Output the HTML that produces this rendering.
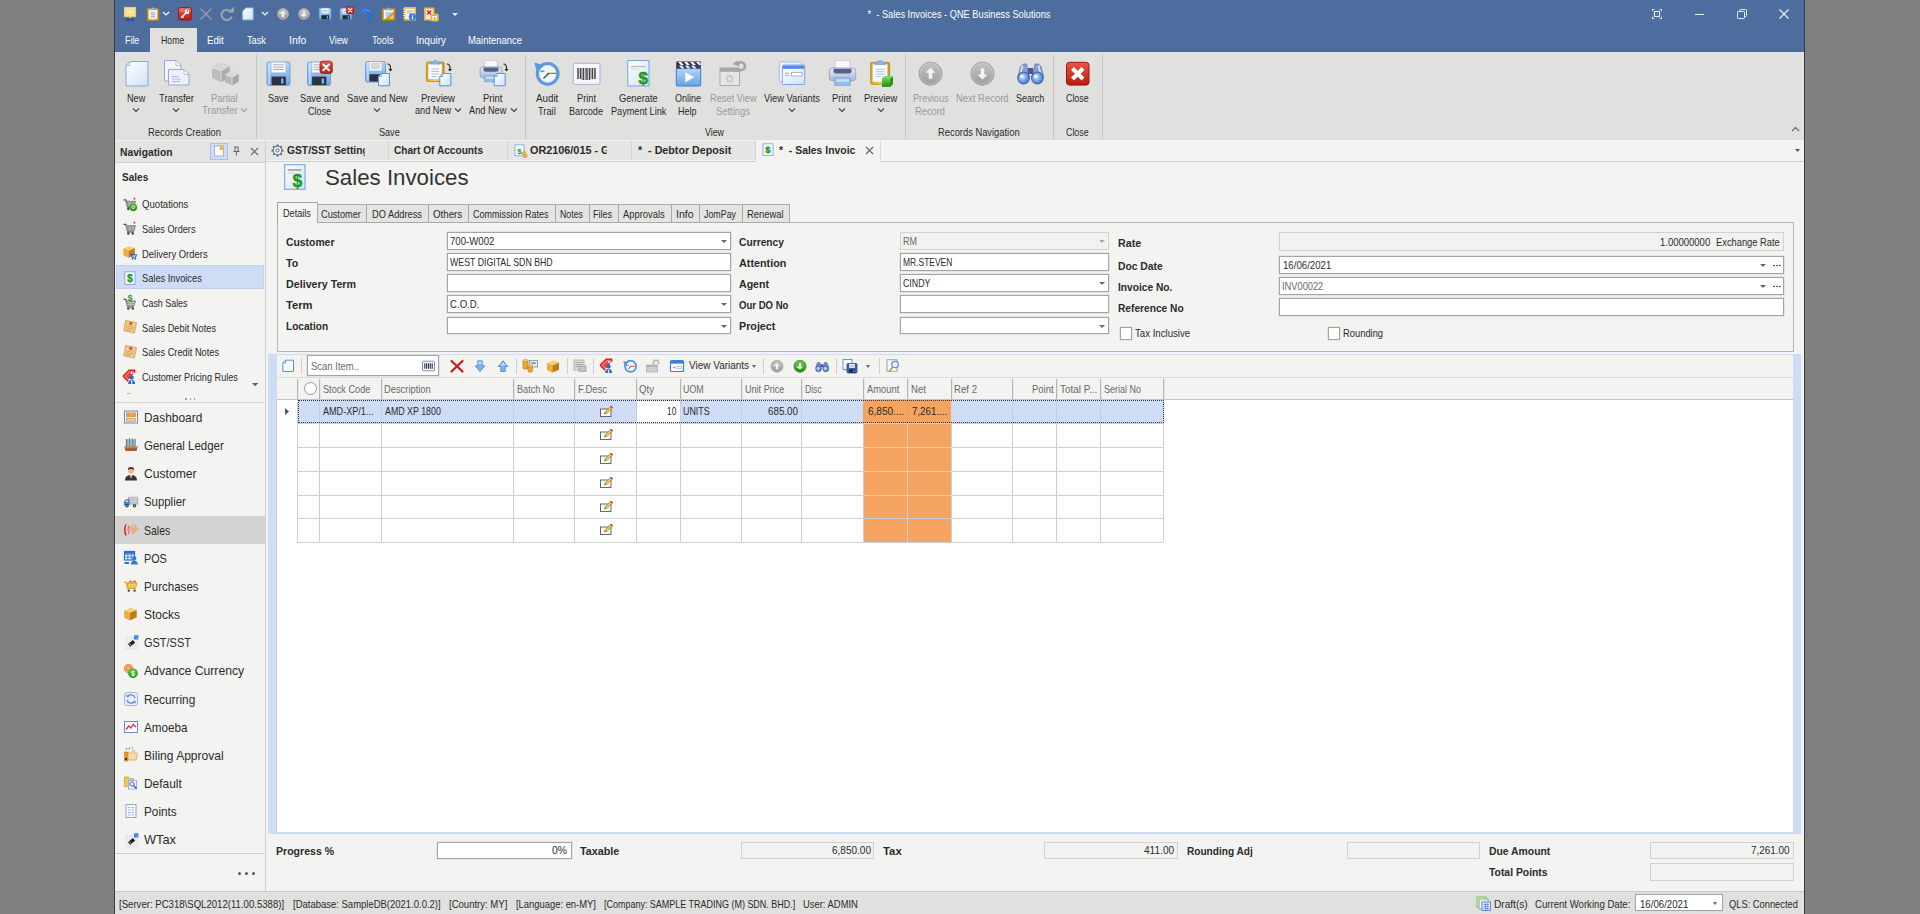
<!DOCTYPE html><html><head><meta charset="utf-8"><title>Sales Invoices</title><style>
*{box-sizing:border-box;margin:0;padding:0}
html,body{width:1920px;height:914px;overflow:hidden;background:#808080}
body{font-family:"Liberation Sans",sans-serif;font-size:11.5px;color:#2b2b2b;position:relative}
div,span,svg.i{position:absolute}
span{white-space:nowrap;line-height:13px}
.b{font-weight:bold}
.wh{color:#fff}
.dis{color:#9a9a9a}
.g{color:#6a6a6a}
.n13{font-size:13.6px;line-height:16px}
.fld{background:#fff;border:1px solid #a4a4a2;box-shadow:0 0 0 .5px #d8d8d6}
.ro{background:#f2f2f0;border:1px solid #d2d2d0}
.sep{width:1px;background:#c9c9c7}
.tab{border:1px solid #a9a9a7;background:#e4e4e2}
.dd{width:0;height:0;border-left:3px solid transparent;border-right:3px solid transparent;border-top:3px solid #666}
</style></head><body><svg width="0" height="0" style="position:absolute"><defs>
<linearGradient id="gDoc" x1="0" y1="0" x2="1" y2="1"><stop offset="0" stop-color="#ffffff"/><stop offset="1" stop-color="#cfe2f8"/></linearGradient>
<linearGradient id="gBlue" x1="0" y1="0" x2="0" y2="1"><stop offset="0" stop-color="#b4d5f7"/><stop offset="1" stop-color="#69a3e4"/></linearGradient>
<linearGradient id="gGray" x1="0" y1="0" x2="0" y2="1"><stop offset="0" stop-color="#c4c4c4"/><stop offset="1" stop-color="#9c9c9c"/></linearGradient>
<linearGradient id="gRed" x1="0" y1="0" x2="0" y2="1"><stop offset="0" stop-color="#e8564a"/><stop offset="1" stop-color="#b81d12"/></linearGradient>
<linearGradient id="gGold" x1="0" y1="0" x2="1" y2="0"><stop offset="0" stop-color="#d9a520"/><stop offset="0.5" stop-color="#f7d35a"/><stop offset="1" stop-color="#c8951a"/></linearGradient>
<linearGradient id="gGreen" x1="0" y1="0" x2="0" y2="1"><stop offset="0" stop-color="#6fd04a"/><stop offset="1" stop-color="#1f8a12"/></linearGradient>
<linearGradient id="gPrn" x1="0" y1="0" x2="0" y2="1"><stop offset="0" stop-color="#e6ebf7"/><stop offset="1" stop-color="#a9b6d8"/></linearGradient>
<radialGradient id="gLens" cx="0.4" cy="0.4" r="0.6"><stop offset="0" stop-color="#cfe4ff"/><stop offset="1" stop-color="#3f78d0"/></radialGradient>
<linearGradient id="gBox" x1="0" y1="0" x2="1" y2="1"><stop offset="0" stop-color="#f6c65a"/><stop offset="1" stop-color="#c98a1c"/></linearGradient>
</defs></svg>
<div style="left:114px;top:0px;width:1px;height:914px;background:#3c3c3c"></div>
<div style="left:1804px;top:0px;width:1px;height:914px;background:#3c3c3c"></div>
<div style="left:115px;top:0px;width:1689px;height:52px;background:#4c6d9d"></div>
<div style="left:115px;top:51px;width:1689px;height:1px;background:#52688a"></div>
<div style="left:115px;top:52px;width:1689px;height:1px;background:#dbe5f3"></div>
<div style="left:115px;top:52px;width:1689px;height:89px;background:#e0e0de;border-bottom:1px solid #cdcdcb"></div>
<div style="left:115px;top:52px;width:1689px;height:1px;background:#dbe5f3"></div>
<div style="left:150px;top:28px;width:47px;height:24px;background:#e0e0de"></div>
<svg class="i" style="left:122px;top:6px" width="16" height="16" viewBox="0 0 16 16"><rect x="2.200" y="1.200" width="11.600" height="9.600" fill="#f8e08c" stroke="#f0d070" stroke-width=".6"/><path d="M5 4.500l3 2 3-2" fill="none" stroke="#fdf2c4" stroke-width="1.200"/><path d="M6.300 10.800h3.400l-1.700 2z" fill="#e8c44a"/><rect x="4" y="12.600" width="8" height="2.200" fill="#2b3f8c"/><path d="M6 12.600v2.200M8 12.600v2.200M10 12.600v2.200" stroke="#5f76c0" stroke-width=".6"/></svg>
<svg class="i" style="left:145px;top:6px" width="16" height="16" viewBox="0 0 16 16"><rect x="2.2" y="2.3" width="11.6" height="12.3" rx="1" fill="url(#gGold)" stroke="#a87c14" stroke-width=".7"/><rect x="3.9000000000000004" y="3.8" width="8.2" height="8.8" fill="#f7fbff"/><path d="M5.5 6.8h5.0M5.5 8.8h5.0M5.5 10.8h5.0" stroke="#6f8fc0" stroke-width=".9"/><path d="M5.1 3.8q0-1.8 2.088-1.8q0.812-1.8 1.624 0q2.088 0 2.088 1.8z" fill="#8fb8e8" stroke="#5b8fd4" stroke-width=".5"/></svg>
<svg class="i" style="left:176.5px;top:6px" width="16" height="16" viewBox="0 0 16 16"><rect x="1.5" y="1.5" width="13" height="12.6" rx="2" fill="url(#gRed)" stroke="#9c1208" stroke-width=".8"/><rect x="2.3" y="2.2" width="11.4" height="4" rx="1.5" fill="#f08a80" opacity=".55"/><circle cx="10" cy="5.8" r="2.3" fill="#fff"/><path d="M8.6 7.2l-4.4 4.4" stroke="#fff" stroke-width="1.6"/><path d="M5.4 10.4l1.3 1.3" stroke="#fff" stroke-width="1.2"/><circle cx="10.5" cy="5.3" r=".8" fill="#d43a2e"/></svg>
<svg class="i" style="left:197.7px;top:6px" width="16" height="16" viewBox="0 0 16 16"><path d="M2.5 2.5l11 11M13.5 2.5l-11 11" stroke="#8f98a8" stroke-width="1.6"/></svg>
<svg class="i" style="left:218.6px;top:6px" width="16" height="16" viewBox="0 0 16 16"><path d="M12.3 6.3A5.2 5.2 0 1 0 12.8 10.5" fill="none" stroke="#9aa2ad" stroke-width="2.2"/><path d="M8.8 6.6h6.2v-6z" fill="#9aa2ad"/></svg>
<svg class="i" style="left:240px;top:6px" width="16" height="16" viewBox="0 0 16 16"><path d="M5.8 2H13.0V13.8H2.8V5Z" fill="url(#gDoc)" stroke="#9fc0ee" stroke-width="1"/></svg>
<svg class="i" style="left:275px;top:6px" width="16" height="16" viewBox="0 0 16 16"><circle cx="8" cy="8" r="5.5" fill="url(#gGray)" stroke="#a6a6a6" stroke-width=".8"/><path d="M8 4.8l3 3h-1.8v3.2h-2.4v-3.2h-3z" fill="#f0f0f0"/></svg>
<svg class="i" style="left:296px;top:6px" width="16" height="16" viewBox="0 0 16 16"><circle cx="8" cy="8" r="5.5" fill="url(#gGray)" stroke="#a6a6a6" stroke-width=".8"/><path d="M8 11.2l3 -3h-1.8v-3.2h-2.4v3.2h-3z" fill="#f0f0f0"/></svg>
<svg class="i" style="left:317px;top:6px" width="16" height="16" viewBox="0 0 16 16"><rect x="2" y="2" width="12.2" height="11.6" rx="1" fill="url(#gBlue)" stroke="#4f86cf" stroke-width=".8"/><rect x="4.683999999999999" y="2.4" width="6.832" height="4.872" fill="#f4f4f4"/><path d="M5.66 4.9h4.88" stroke="#999" stroke-width=".9"/><rect x="4.4399999999999995" y="9.192" width="7.563999999999999" height="4.108" fill="#222836"/><rect x="9.808" y="10.12" width="1" height="2.32" fill="#9cc8f4"/></svg>
<svg class="i" style="left:338px;top:6px" width="16" height="16" viewBox="0 0 16 16"><rect x="2" y="2.2" width="12" height="11.4" rx="1" fill="url(#gBlue)" stroke="#4f86cf" stroke-width=".8"/><rect x="4.640000000000001" y="2.6" width="6.720000000000001" height="4.788" fill="#f4f4f4"/><path d="M5.6 5.050000000000001h4.800000000000001" stroke="#999" stroke-width=".9"/><rect x="4.4" y="9.268" width="7.4399999999999995" height="4.032" fill="#222836"/><rect x="9.68" y="10.18" width="1" height="2.2800000000000002" fill="#9cc8f4"/><rect x="8.6" y="0.8" width="7" height="7" rx="1.2" fill="url(#gRed)" stroke="#a3160d" stroke-width=".8"/><path d="M10.49 2.6900000000000004L13.709999999999999 5.909999999999999M13.709999999999999 2.6900000000000004L10.49 5.909999999999999" stroke="#fff" stroke-width="1.1900000000000002" stroke-linecap="round"/></svg>
<svg class="i" style="left:359px;top:6px" width="16" height="16" viewBox="0 0 16 16"><path d="M4.500 4.800h3.200q4.300 0 4.300 4.300q0 3-2.800 5.400" fill="none" stroke="#2a6be0" stroke-width="2.600"/><path d="M4.500 4.300h3.200q3.300 0 4 2.800" fill="none" stroke="#6fa4f4" stroke-width="1"/><path d="M7 1v7.600l-5.600-3.800z" fill="#3a7ceb"/></svg>
<svg class="i" style="left:381px;top:6px" width="16" height="16" viewBox="0 0 16 16"><rect x="1.3" y="2.5" width="12.7" height="12.0" rx="1" fill="#e2a820" stroke="#a87c14" stroke-width=".7"/><rect x="3.0" y="4" width="9.299999999999999" height="8.5" fill="#f7fbff"/><path d="M4.6 7h6.1M4.6 9h6.1M4.6 11h6.1" stroke="#6f8fc0" stroke-width=".9"/><path d="M4.475 4q0-1.8 2.2859999999999996-1.8q0.889-1.8 1.778 0q2.2859999999999996 0 2.2859999999999996 1.8z" fill="#8fb8e8" stroke="#5b8fd4" stroke-width=".5"/><path d="M14 4.5v9.5h-9.5z" fill="#d6a030" stroke="#9a6c10" stroke-width=".6"/><path d="M12 9v3.5h-3.5z" fill="#f5d98a"/></svg>
<svg class="i" style="left:402px;top:6px" width="16" height="16" viewBox="0 0 16 16"><rect x="2" y="1" width="12" height="13.5" fill="#f0b848"/><rect x="3.5" y="2.8" width="9" height="10" fill="#faf6ee"/><path d="M2 2.5v11" stroke="#fff" stroke-width="1.4" stroke-dasharray="1 1.2"/><path d="M5 5h6.5M5 7h4" stroke="#999" stroke-width=".8"/><circle cx="10.5" cy="10.8" r="3.6" fill="#2f78d4" stroke="#6fa4e8" stroke-width=".6"/><path d="M10.5 8.4v1M10.5 10.2v3" stroke="#fff" stroke-width="1.3"/></svg>
<svg class="i" style="left:423px;top:6px" width="16" height="16" viewBox="0 0 16 16"><rect x="1" y="1.5" width="10.5" height="13" fill="#e8b450"/><rect x="2.8" y="3" width="7" height="10" fill="#f6ead2"/><path d="M4.3 4.5l3.8 4M8.1 4.5l-3.8 4" stroke="#c6282a" stroke-width="1.4"/><path d="M4.5 1.5q1.7-1.8 3.5 0" fill="#999" stroke="#777" stroke-width=".5"/><rect x="7.8" y="8" width="7.5" height="7" rx="1" fill="#e9a820" stroke="#f6d98a" stroke-width=".6"/><path d="M10 10.2v4M13 10.2v4M9 10.6h5" stroke="#fff" stroke-width="1.1"/></svg>
<svg class="i" style="left:162px;top:11px" width="8" height="6" viewBox="0 0 8 6"><path d="M1 1 L4 4 L7 1" stroke="#fff" stroke-width="1.2" fill="none"/></svg>
<svg class="i" style="left:261px;top:11px" width="8" height="6" viewBox="0 0 8 6"><path d="M1 1 L4 4 L7 1" stroke="#fff" stroke-width="1.2" fill="none"/></svg>
<svg class="i" style="left:451.500px;top:13px" width="6" height="3" viewBox="0 0 6 3"><path d="M0 0h6L3 3z" fill="#e8ecf4"/></svg>
<span class="t wh" style="left:958.5px;top:8px;transform:translateX(-50%) scaleX(0.804);transform-origin:50% 0;">*&nbsp; - Sales Invoices - QNE Business Solutions</span>
<svg class="i" style="left:1652px;top:9px" width="10" height="10" viewBox="0 0 10 10"><rect x="2.500" y="2.500" width="5" height="5" fill="none" stroke="#e6ebf3" stroke-width="1.100"/><path d="M.5 2.300V.5h1.800M7.700 .5h1.800v1.800M9.500 7.700v1.800H7.700M2.300 9.500H.5V7.700" stroke="#e6ebf3" stroke-width="1" fill="none"/></svg>
<div style="left:1695px;top:14px;width:9px;height:1px;background:#f0f3f8"></div>
<svg class="i" style="left:1736.500px;top:9px" width="10" height="10" viewBox="0 0 10 10"><rect x=".5" y="2.500" width="7" height="7" rx=".8" fill="none" stroke="#e6ebf3" stroke-width="1"/><path d="M2.500 2.500v-1.200q0-.8 .8-.8h5.400q.8 0 .8 .8v5.400q0 .8-.8 .8h-1.200" fill="none" stroke="#e6ebf3" stroke-width="1"/></svg>
<svg class="i" style="left:1778.500px;top:9px" width="10" height="10" viewBox="0 0 10 10"><path d="M.5 .5l9 9M9.500 .5l-9 9" stroke="#f0f3f8" stroke-width="1.100"/></svg>
<span class="t wh" style="left:125px;top:34px;transform:scaleX(0.772);transform-origin:0 0;">File</span>
<span class="t " style="left:161px;top:34px;transform:scaleX(0.759);transform-origin:0 0;">Home</span>
<span class="t wh" style="left:207.3px;top:34px;transform:scaleX(0.842);transform-origin:0 0;">Edit</span>
<span class="t wh" style="left:247px;top:34px;transform:scaleX(0.803);transform-origin:0 0;">Task</span>
<span class="t wh" style="left:288.7px;top:34px;transform:scaleX(0.902);transform-origin:0 0;">Info</span>
<span class="t wh" style="left:329.3px;top:34px;transform:scaleX(0.769);transform-origin:0 0;">View</span>
<span class="t wh" style="left:371.7px;top:34px;transform:scaleX(0.804);transform-origin:0 0;">Tools</span>
<span class="t wh" style="left:416px;top:34px;transform:scaleX(0.869);transform-origin:0 0;">Inquiry</span>
<span class="t wh" style="left:468.3px;top:34px;transform:scaleX(0.82);transform-origin:0 0;">Maintenance</span>
<svg class="i" style="left:120px;top:58px" width="32" height="32" viewBox="0 0 32 32"><path d="M10 3.5H28V28.0H6V7.5Z" fill="url(#gDoc)" stroke="#8ea6d6" stroke-width="1"/><path d="M6 7.5H10V3.5Z" fill="#e8f0fb" stroke="#8ea6d6" stroke-width="0.7"/></svg>
<span class="t" style="left:126.7px;top:92px;transform:scaleX(0.795);transform-origin:0 0;">New</span>
<svg class="i" style="left:132px;top:108px" width="8" height="5" viewBox="0 0 8 5"><path d="M1 0.500 L4 3.500 L7 0.500" stroke="#444" stroke-width="1.100" fill="none"/></svg>
<svg class="i" style="left:160px;top:58px" width="32" height="32" viewBox="0 0 32 32"><path d="M4.5 2.5H16.0L21.0 7.5V23.0H4.5Z" fill="#f3f5fd" stroke="#9aa8dc" stroke-width="1"/><path d="M16.0 2.5V7.5H21.0Z" fill="#fff" stroke="#9aa8dc" stroke-width="0.7"/><path d="M8.5 11.5H24.0L29.0 16.5V27.0H8.5Z" fill="#eef1fc" stroke="#9aa8dc" stroke-width="1"/><path d="M24.0 11.5V16.5H29.0Z" fill="#fff" stroke="#9aa8dc" stroke-width="0.7"/><path d="M12 18.5h7M12 21h9M12 23.5h8" stroke="#a9b6e2" stroke-width="1.2"/></svg>
<span class="t" style="left:159px;top:92px;transform:scaleX(0.826);transform-origin:0 0;">Transfer</span>
<svg class="i" style="left:172px;top:108px" width="8" height="5" viewBox="0 0 8 5"><path d="M1 0.500 L4 3.500 L7 0.500" stroke="#444" stroke-width="1.100" fill="none"/></svg>
<svg class="i" style="left:208px;top:58px" width="32" height="32" viewBox="0 0 32 32"><path d="M4 9.500l8.500-5 9 3.500v10.500l-8.500 5.500-9-4z" fill="#bdbdbd"/><path d="M4 9.500l8.500-5 9 3.500-8.500 5z" fill="#d9d9d9"/><path d="M13 13v11.500l8.500-5.500v-10.500z" fill="#acacac"/><path d="M4 9.500l9 3.500 8.500-5M13 13v11.500" stroke="#e2e2e2" stroke-width=".7" fill="none"/><path d="M8 7.200l9 3.600" stroke="#cacaca" stroke-width=".8"/><path d="M17 16.500l6.500-4 7 3v8l-6.500 4-7-3.200z" fill="#b8b8b8"/><path d="M17 16.500l6.500-4 7 3-6.500 4z" fill="#dadada"/><path d="M24 19.500v8l6.500-4v-8z" fill="#a8a8a8"/><path d="M17 16.500l7 3 6.500-4M24 19.500v8" stroke="#e4e4e4" stroke-width=".7" fill="none"/></svg>
<span class="t dis" style="left:211px;top:92px;transform:scaleX(0.819);transform-origin:0 0;">Partial</span>
<span class="t dis" style="left:201.7px;top:104px;transform:scaleX(0.84);transform-origin:0 0;">Transfer</span>
<svg class="i" style="left:240.2px;top:108px" width="8" height="5" viewBox="0 0 8 5"><path d="M1 0.500 L4 3.500 L7 0.500" stroke="#a2a2a2" stroke-width="1.100" fill="none"/></svg>
<svg class="i" style="left:262px;top:58px" width="32" height="32" viewBox="0 0 32 32"><rect x="5" y="4" width="23" height="23.5" rx="2" fill="url(#gBlue)" stroke="#6a9cdf" stroke-width=".9"/><rect x="6.3" y="5" width="1.8" height="21.5" fill="#d8e9fb" opacity=".7"/><rect x="9.600000000000001" y="4.5" width="13.799999999999999" height="9.87" fill="#fbfbfb" stroke="#c9d3e3" stroke-width=".5"/><path d="M11.100000000000001 6.82h10.799999999999999M11.100000000000001 9.17h10.799999999999999M11.100000000000001 11.52h10.799999999999999" stroke="#a4a4a4" stroke-width=".9"/><rect x="9.600000000000001" y="18.57" width="14.26" height="8.43" fill="#2c3240"/><rect x="19.259999999999998" y="20.45" width="2.07" height="5.17" fill="#8fc0f2"/></svg>
<span class="t" style="left:267.7px;top:92px;transform:scaleX(0.786);transform-origin:0 0;">Save</span>
<svg class="i" style="left:303px;top:58px" width="32" height="32" viewBox="0 0 32 32"><rect x="4.5" y="4" width="23" height="23.5" rx="2" fill="url(#gBlue)" stroke="#6a9cdf" stroke-width=".9"/><rect x="5.8" y="5" width="1.8" height="21.5" fill="#d8e9fb" opacity=".7"/><rect x="9.100000000000001" y="4.5" width="13.799999999999999" height="9.87" fill="#fbfbfb" stroke="#c9d3e3" stroke-width=".5"/><path d="M10.600000000000001 6.82h10.799999999999999M10.600000000000001 9.17h10.799999999999999M10.600000000000001 11.52h10.799999999999999" stroke="#a4a4a4" stroke-width=".9"/><rect x="9.100000000000001" y="18.57" width="14.26" height="8.43" fill="#2c3240"/><rect x="18.759999999999998" y="20.45" width="2.07" height="5.17" fill="#8fc0f2"/><rect x="17" y="3.2" width="12.3" height="12.3" rx="2.5" fill="url(#gRed)" stroke="#a3160d" stroke-width=".8"/><path d="M20.321 6.521000000000001L25.979 12.179000000000002M25.979 6.521000000000001L20.321 12.179000000000002" stroke="#fff" stroke-width="2.091" stroke-linecap="round"/></svg>
<span class="t" style="left:300px;top:92px;transform:scaleX(0.808);transform-origin:0 0;">Save and</span>
<span class="t" style="left:307.7px;top:104.5px;transform:scaleX(0.782);transform-origin:0 0;">Close</span>
<svg class="i" style="left:361px;top:58px" width="32" height="32" viewBox="0 0 32 32"><rect x="4.5" y="3.5" width="20" height="20.5" rx="2" fill="url(#gBlue)" stroke="#6a9cdf" stroke-width=".9"/><rect x="5.8" y="4.5" width="1.8" height="18.5" fill="#d8e9fb" opacity=".7"/><rect x="8.5" y="4.0" width="12.0" height="8.61" fill="#fbfbfb" stroke="#c9d3e3" stroke-width=".5"/><path d="M10.0 5.96h9.0M10.0 8.01h9.0M10.0 10.06h9.0" stroke="#a4a4a4" stroke-width=".9"/><rect x="8.5" y="16.21" width="12.4" height="7.29" fill="#2c3240"/><rect x="16.9" y="17.85" width="1.7999999999999998" height="4.51" fill="#8fc0f2"/><path d="M20.5 15.5H28.5V27.8H17.5V18.5Z" fill="url(#gDoc)" stroke="#5f8fd8" stroke-width="1"/><path d="M17.5 18.5H20.5V15.5Z" fill="#e8f0fb" stroke="#5f8fd8" stroke-width="0.7"/><path d="M26.5 6q3 0 3 4v2" fill="none" stroke="#222" stroke-width="1.1"/><path d="M27.5 11h4l-2 2.6z" fill="#222"/></svg>
<span class="t" style="left:346.7px;top:92px;transform:scaleX(0.81);transform-origin:0 0;">Save and New</span>
<svg class="i" style="left:373px;top:108px" width="8" height="5" viewBox="0 0 8 5"><path d="M1 0.500 L4 3.500 L7 0.500" stroke="#444" stroke-width="1.100" fill="none"/></svg>
<svg class="i" style="left:421px;top:58px" width="32" height="32" viewBox="0 0 32 32"><rect x="5.3" y="4" width="17.8" height="19.5" rx="1.5" fill="url(#gGold)" stroke="#b8860b" stroke-width=".8"/><rect x="7.5" y="6" width="13.4" height="15.0" fill="#fafcff" stroke="#c9d3e3" stroke-width=".5"/><path d="M10.3 11h7.800000000000001M10.3 13.5h7.800000000000001M10.3 16h7.800000000000001M10.3 18.5h4.680000000000001" stroke="#9fc2ea" stroke-width="1.1"/><path d="M9.216000000000001 6Q9.216000000000001 3.5 12.420000000000002 3.5Q14.2 0.5 15.98 3.5Q19.184 3.5 19.184 6Z" fill="#8fb8e8" stroke="#5b8fd4" stroke-width=".7"/><path d="M21.8 15.5H29.8V27.8H18.8V18.5Z" fill="url(#gDoc)" stroke="#5f8fd8" stroke-width="1"/><path d="M18.8 18.5H21.8V15.5Z" fill="#e8f0fb" stroke="#5f8fd8" stroke-width="0.7"/><path d="M26 6q3 0 3 4v2" fill="none" stroke="#222" stroke-width="1.1"/><path d="M27 11h4l-2 2.6z" fill="#222"/></svg>
<span class="t" style="left:421px;top:92px;transform:scaleX(0.831);transform-origin:0 0;">Preview</span>
<span class="t" style="left:415px;top:104px;transform:scaleX(0.793);transform-origin:0 0;">and New</span>
<svg class="i" style="left:453.8px;top:108px" width="8" height="5" viewBox="0 0 8 5"><path d="M1 0.500 L4 3.500 L7 0.500" stroke="#444" stroke-width="1.100" fill="none"/></svg>
<svg class="i" style="left:477px;top:58px" width="32" height="32" viewBox="0 0 32 32"><rect x="7.84" y="2.3" width="12.32" height="9.24" fill="#fafbff" stroke="#b9c2d9" stroke-width=".7"/><rect x="3" y="8.899999999999999" width="22" height="11.0" rx="3" fill="url(#gPrn)" stroke="#8f9cc4" stroke-width=".8"/><path d="M6.52 9.56H21.48V11.98Q21.48 13.740000000000002 19.28 13.740000000000002H8.72Q6.52 13.740000000000002 6.52 11.98Z" fill="#55618a"/><rect x="7.4" y="17.26" width="13.2" height="6.6" fill="#8cc0ef" stroke="#8f9cc4" stroke-width=".7"/><rect x="8.72" y="18.580000000000002" width="10.559999999999999" height="2.2" fill="#c6e0f8"/><path d="M20.2 15.5H28.2V27.8H17.2V18.5Z" fill="url(#gDoc)" stroke="#5f8fd8" stroke-width="1"/><path d="M17.2 18.5H20.2V15.5Z" fill="#e8f0fb" stroke="#5f8fd8" stroke-width="0.7"/><path d="M26.5 6q3 0 3 4v2" fill="none" stroke="#222" stroke-width="1.1"/><path d="M27.5 11h4l-2 2.6z" fill="#222"/></svg>
<span class="t" style="left:483.3px;top:92px;transform:scaleX(0.82);transform-origin:0 0;">Print</span>
<span class="t" style="left:469.3px;top:104px;transform:scaleX(0.801);transform-origin:0 0;">And New</span>
<svg class="i" style="left:509.70000000000005px;top:108px" width="8" height="5" viewBox="0 0 8 5"><path d="M1 0.500 L4 3.500 L7 0.500" stroke="#444" stroke-width="1.100" fill="none"/></svg>
<svg class="i" style="left:531px;top:58px" width="32" height="32" viewBox="0 0 32 32"><circle cx="16.700" cy="15.800" r="10.300" fill="#f2f6fb" stroke="#5a9adf" stroke-width="3.200"/><path d="M3.300 4.800l10.200 2.300-7.300 7.400z" fill="#5a9adf"/><path d="M5 13.300h8.500" stroke="#5a9adf" stroke-width="1.600"/><circle cx="16.700" cy="15.800" r="8.300" fill="none" stroke="#d7e5f5" stroke-width="1"/><path d="M17.500 15.500L12.500 20.500" stroke="#444" stroke-width="1.300"/><circle cx="17.500" cy="15.500" r="1.100" fill="#555"/><path d="M18.500 15.300h7" stroke="#d23a2a" stroke-width="1"/></svg>
<span class="t" style="left:536px;top:92px;transform:scaleX(0.851);transform-origin:0 0;">Audit</span>
<span class="t" style="left:538.3px;top:104.5px;transform:scaleX(0.807);transform-origin:0 0;">Trail</span>
<svg class="i" style="left:570px;top:58px" width="32" height="32" viewBox="0 0 32 32"><rect x="3.3" y="5.3" width="26.7" height="21" rx="1" fill="#f7f8fd" stroke="#a9b2d8" stroke-width="1"/><path d="M8 10v11M10.5 10v11M13.5 10v12M17 10v12M19.5 10v12M22.5 10v11M25 10v11" stroke="#444" stroke-width="1.5"/><path d="M12 10v12M15.5 10v12M21 10v11" stroke="#777" stroke-width=".8"/></svg>
<span class="t" style="left:576.7px;top:92px;transform:scaleX(0.803);transform-origin:0 0;">Print</span>
<span class="t" style="left:569.3px;top:104.5px;transform:scaleX(0.794);transform-origin:0 0;">Barcode</span>
<svg class="i" style="left:622px;top:58px" width="32" height="32" viewBox="0 0 32 32"><rect x="5.8" y="2.5" width="21.2" height="25.5" fill="url(#gDoc)" stroke="#7fa3e0" stroke-width="1"/><path d="M9 8.5h14.5" stroke="#b5b5b5" stroke-width="1.2"/><path d="M9 11h8" stroke="#d0d0d0" stroke-width="1"/><text x="21.2" y="26.2" font-family="Liberation Sans" font-weight="bold" font-size="17" fill="#1f9a1f" stroke="#1f9a1f" stroke-width=".5" text-anchor="middle">$</text></svg>
<span class="t" style="left:618.7px;top:92px;transform:scaleX(0.805);transform-origin:0 0;">Generate</span>
<span class="t" style="left:610.7px;top:104.5px;transform:scaleX(0.794);transform-origin:0 0;">Payment Link</span>
<svg class="i" style="left:672px;top:58px" width="32" height="32" viewBox="0 0 32 32"><rect x="4.3" y="10" width="24.4" height="18" rx="1" fill="url(#gBlue)" stroke="#3f7fd0" stroke-width="1"/><rect x="4.3" y="3.5" width="24.4" height="7" fill="#2a3350"/><path d="M6 4l3 3h3l-3-3zM12 4l3 3h3l-3-3zM18 4l3 3h3l-3-3zM24 4l3 3h1.7v-1.3l-1.7-1.7z" fill="#fff"/><path d="M4.3 7.5h24.4v3H4.3z" fill="#3a4566"/><path d="M7 7.5l2.5 3h3l-2.5-3zM13 7.5l2.5 3h3l-2.5-3zM19 7.5l2.5 3h3l-2.5-3z" fill="#e6eaf4"/><path d="M13.5 14.5l8.5 4.7-8.5 4.8z" fill="#fff" stroke="#e6f0fb" stroke-width=".6"/></svg>
<span class="t" style="left:675px;top:92px;transform:scaleX(0.782);transform-origin:0 0;">Online</span>
<span class="t" style="left:678.3px;top:104.5px;transform:scaleX(0.778);transform-origin:0 0;">Help</span>
<svg class="i" style="left:717px;top:58px" width="32" height="32" viewBox="0 0 32 32"><rect x="3" y="10" width="19.5" height="17.5" fill="#e6e6e6" stroke="#a8a8a8" stroke-width="1"/><rect x="3" y="10" width="19.5" height="3.8" fill="#a8a8a8"/><g stroke="#c2c2c2" stroke-width="1.3"><path d="M12.7 16.5v8.4M8.5 20.7h8.4M9.7 17.7l6 6M15.7 17.7l-6 6"/></g><circle cx="12.7" cy="20.7" r="2.3" fill="#e6e6e6" stroke="#c2c2c2"/><path d="M17.5 12.2h6.5a4 4 0 1 0-4-4.6" fill="none" stroke="#a4a4a4" stroke-width="2.6"/><path d="M15.5 7.2h8l-4 -4.7z" fill="#a4a4a4" transform="rotate(12 19.5 6)"/></svg>
<span class="t dis" style="left:710px;top:92px;transform:scaleX(0.806);transform-origin:0 0;">Reset View</span>
<span class="t dis" style="left:716px;top:104.5px;transform:scaleX(0.818);transform-origin:0 0;">Settings</span>
<svg class="i" style="left:776px;top:58px" width="32" height="32" viewBox="0 0 32 32"><rect x="3.3" y="4" width="22.5" height="19.5" rx="1" fill="#f4f8fe" stroke="#9fbce8" stroke-width="1"/><rect x="6.3" y="7" width="22.4" height="19.5" rx="1" fill="url(#gDoc)" stroke="#7fa3e0" stroke-width="1"/><rect x="6.8" y="7.5" width="21.4" height="3.3" fill="#4d8be0"/><path d="M9 15.3h4M9 17.5h4" stroke="#b0b0b0" stroke-width="1.1"/><rect x="15.5" y="14.5" width="10.5" height="3.5" fill="#fff" stroke="#b0b0b0" stroke-width=".9"/></svg>
<span class="t" style="left:764px;top:92px;transform:scaleX(0.809);transform-origin:0 0;">View Variants</span>
<svg class="i" style="left:788px;top:108px" width="8" height="5" viewBox="0 0 8 5"><path d="M1 0.500 L4 3.500 L7 0.500" stroke="#444" stroke-width="1.100" fill="none"/></svg>
<svg class="i" style="left:826px;top:58px" width="32" height="32" viewBox="0 0 32 32"><rect x="9.108" y="2.3" width="14.784" height="10.752" fill="#fafbff" stroke="#b9c2d9" stroke-width=".7"/><rect x="3.3" y="9.98" width="26.4" height="12.8" rx="3" fill="url(#gPrn)" stroke="#8f9cc4" stroke-width=".8"/><path d="M7.524 10.748000000000001H25.476V13.564Q25.476 15.612000000000002 22.836 15.612000000000002H10.164Q7.524 15.612000000000002 7.524 13.564Z" fill="#55618a"/><rect x="8.58" y="19.708000000000002" width="15.839999999999998" height="7.68" fill="#8cc0ef" stroke="#8f9cc4" stroke-width=".7"/><rect x="10.164" y="21.244" width="12.671999999999999" height="2.5600000000000005" fill="#c6e0f8"/></svg>
<span class="t" style="left:832.3px;top:92px;transform:scaleX(0.82);transform-origin:0 0;">Print</span>
<svg class="i" style="left:838px;top:108px" width="8" height="5" viewBox="0 0 8 5"><path d="M1 0.500 L4 3.500 L7 0.500" stroke="#444" stroke-width="1.100" fill="none"/></svg>
<svg class="i" style="left:864px;top:58px" width="32" height="32" viewBox="0 0 32 32"><rect x="6.6" y="4.3" width="19" height="22" rx="1.5" fill="url(#gGold)" stroke="#b8860b" stroke-width=".8"/><rect x="8.8" y="6.3" width="14.6" height="17.5" fill="#fafcff" stroke="#c9d3e3" stroke-width=".5"/><path d="M11.6 11.3h9M11.6 13.8h9M11.6 16.3h9M11.6 18.8h5.3999999999999995" stroke="#9fc2ea" stroke-width="1.1"/><path d="M10.78 6.3Q10.78 3.8 14.2 3.8Q16.1 0.7999999999999998 18.0 3.8Q21.42 3.8 21.42 6.3Z" fill="#8fb8e8" stroke="#5b8fd4" stroke-width=".7"/><path d="M18 20.5l2.5-2.3h8.4v8l-2.5 2.4h-8.4z" fill="#1f8a12"/><rect x="18" y="20.5" width="8.5" height="8.2" fill="url(#gGreen)"/><path d="M18 20.5l2.5-2.3h8.4l-2.4 2.3z" fill="#8fe070"/></svg>
<span class="t" style="left:864px;top:92px;transform:scaleX(0.814);transform-origin:0 0;">Preview</span>
<svg class="i" style="left:876.5px;top:108px" width="8" height="5" viewBox="0 0 8 5"><path d="M1 0.500 L4 3.500 L7 0.500" stroke="#444" stroke-width="1.100" fill="none"/></svg>
<svg class="i" style="left:914px;top:58px" width="32" height="32" viewBox="0 0 32 32"><circle cx="16.5" cy="15.6" r="11.6" fill="url(#gGray)" stroke="#a6a6a6" stroke-width="1"/><circle cx="16.5" cy="15.6" r="10.1" fill="none" stroke="#d0d0d0" stroke-width=".8" opacity=".6"/><path d="M16.5 9.6l5 5.2h-3.2v6h-3.6v-6h-3.2z" fill="#f4f4f4"/></svg>
<span class="t dis" style="left:912.7px;top:92px;transform:scaleX(0.796);transform-origin:0 0;">Previous</span>
<span class="t dis" style="left:915px;top:104.5px;transform:scaleX(0.809);transform-origin:0 0;">Record</span>
<svg class="i" style="left:965px;top:58px" width="32" height="32" viewBox="0 0 32 32"><circle cx="17.5" cy="15.6" r="11.6" fill="url(#gGray)" stroke="#a6a6a6" stroke-width="1"/><circle cx="17.5" cy="15.6" r="10.1" fill="none" stroke="#d0d0d0" stroke-width=".8" opacity=".6"/><path d="M17.5 21.6l5 -5.2h-3.2v-6h-3.6v6h-3.2z" fill="#f4f4f4"/></svg>
<span class="t dis" style="left:955.7px;top:92px;transform:scaleX(0.823);transform-origin:0 0;">Next Record</span>
<svg class="i" style="left:1014px;top:58px" width="32" height="32" viewBox="0 0 32 32"><path d="M6.5 8.5q2-3.5 6-2.5l2.5 12h-11z" fill="#8aa0d0" stroke="#5a6fa8" stroke-width=".7"/><path d="M27 8.5q-2-3.5-6-2.5l-2.5 12h11z" fill="#8aa0d0" stroke="#5a6fa8" stroke-width=".7"/><path d="M8.5 7.5l-2.5 10M24.5 7.5l2.5 10" stroke="#dfe7f7" stroke-width="1.6"/><rect x="14" y="10" width="5" height="6" fill="#44598f"/><circle cx="9.6" cy="20" r="5.8" fill="url(#gLens)" stroke="#4a64a8" stroke-width="1.2"/><circle cx="23.4" cy="20" r="5.8" fill="url(#gLens)" stroke="#4a64a8" stroke-width="1.2"/><circle cx="8" cy="18.3" r="1.6" fill="#fff" opacity=".8"/><circle cx="21.8" cy="18.3" r="1.6" fill="#fff" opacity=".8"/></svg>
<span class="t" style="left:1015.7px;top:92px;transform:scaleX(0.777);transform-origin:0 0;">Search</span>
<svg class="i" style="left:1061px;top:58px" width="32" height="32" viewBox="0 0 32 32"><rect x="5.5" y="4.3" width="22.5" height="22.8" rx="3" fill="url(#gRed)" stroke="#a3160d" stroke-width="1"/><path d="M11.5 10.5L22 21M22 10.5L11.5 21" stroke="#fff" stroke-width="4" stroke-linecap="butt"/></svg>
<span class="t" style="left:1065.7px;top:92px;transform:scaleX(0.769);transform-origin:0 0;">Close</span>
<div class="sep" style="left:256px;top:54px;width:1px;height:85px;"></div>
<div class="sep" style="left:525px;top:54px;width:1px;height:85px;"></div>
<div class="sep" style="left:905px;top:54px;width:1px;height:85px;"></div>
<div class="sep" style="left:1053px;top:54px;width:1px;height:85px;"></div>
<div class="sep" style="left:1102px;top:54px;width:1px;height:85px;"></div>
<span class="t" style="left:147.7px;top:126px;transform:scaleX(0.816);transform-origin:0 0;">Records Creation</span>
<span class="t" style="left:379.3px;top:126px;transform:scaleX(0.79);transform-origin:0 0;">Save</span>
<span class="t" style="left:705px;top:126px;transform:scaleX(0.769);transform-origin:0 0;">View</span>
<span class="t" style="left:937.7px;top:126px;transform:scaleX(0.813);transform-origin:0 0;">Records Navigation</span>
<span class="t" style="left:1065.7px;top:126px;transform:scaleX(0.769);transform-origin:0 0;">Close</span>
<svg class="i" style="left:1791px;top:126px" width="9" height="6" viewBox="0 0 9 6"><path d="M1 5 L4.500 1.500 L8 5" stroke="#666" stroke-width="1.100" fill="none"/></svg>
<div style="left:115px;top:140px;width:151px;height:751px;background:#f3f3f1;border-right:1px solid #cfcfcd"></div>
<div style="left:115px;top:141px;width:150px;height:22px;background:#e4e4e2;border-bottom:1px solid #d0d0ce"></div>
<span class="t b" style="left:120.2px;top:146px;transform:scaleX(0.893);transform-origin:0 0;">Navigation</span>
<div style="left:210px;top:143px;width:18px;height:17px;background:#cfdcf5;border:1px solid #a9c0ea"></div>
<svg class="i" style="left:213px;top:145px" width="12" height="12" viewBox="0 0 12 12"><rect x="1.5" y="1" width="9" height="10" fill="#fdfdfd" stroke="#9aa6c4" stroke-width=".8"/><rect x="6.5" y="0.8" width="4.2" height="4.2" fill="#f3b544"/></svg>
<svg class="i" style="left:232px;top:146px" width="9" height="11" viewBox="0 0 9 11"><path d="M2.5 1h4M3 1v4M6 1v4M1.5 5.5h6M4.5 5.5v4" stroke="#666" stroke-width="1" fill="none"/></svg>
<svg class="i" style="left:250px;top:147px" width="9" height="9" viewBox="0 0 9 9"><path d="M1 1l7 7M8 1l-7 7" stroke="#666" stroke-width="1.1"/></svg>
<span class="t b" style="left:122.2px;top:171px;transform:scaleX(0.872);transform-origin:0 0;">Sales</span>
<div style="left:116px;top:265px;width:148px;height:24px;background:#cfdcf5;border:1px solid #bfd0f0"></div>
<svg class="i" style="left:122px;top:196px" width="16" height="16" viewBox="0 0 16 16"><g transform="translate(0 0)"><path d="M1.500 3.800h2.300l.6 1.700" fill="none" stroke="#555" stroke-width="1.200"/><path d="M3.800 5.300h9.700l-1.600 5.400h-6.700z" fill="#7d7d7d" stroke="#666" stroke-width=".6"/><path d="M4.800 7h8M5.200 8.800h7M6.800 5.500l.5 5M9 5.500v5M11.300 5.500l-.5 5" stroke="#d4d4d4" stroke-width=".6"/><path d="M5.200 11.600h6.700" stroke="#555" stroke-width=".9"/><circle cx="6.300" cy="13" r="1.200" fill="#444"/><circle cx="10.800" cy="13" r="1.200" fill="#444"/></g><path d="M11 1.3l2.8 1.2-1.6 1.6z" fill="#d8362a"/><circle cx="11.3" cy="11.3" r="3.6" fill="url(#gGreen)" stroke="#2a8a1a" stroke-width=".6"/><circle cx="11.3" cy="11.3" r="1.3" fill="none" stroke="#d8f5c8" stroke-width=".9"/></svg>
<span class="t" style="left:141.8px;top:198px;transform:scaleX(0.834);transform-origin:0 0;">Quotations</span>
<svg class="i" style="left:122px;top:220px" width="16" height="16" viewBox="0 0 16 16"><g transform="translate(0 0.5)"><path d="M1.500 3.800h2.300l.6 1.700" fill="none" stroke="#555" stroke-width="1.200"/><path d="M3.800 5.300h9.700l-1.600 5.400h-6.700z" fill="#7d7d7d" stroke="#666" stroke-width=".6"/><path d="M4.800 7h8M5.200 8.800h7M6.800 5.500l.5 5M9 5.500v5M11.300 5.500l-.5 5" stroke="#d4d4d4" stroke-width=".6"/><path d="M5.200 11.600h6.700" stroke="#555" stroke-width=".9"/><circle cx="6.300" cy="13" r="1.200" fill="#444"/><circle cx="10.800" cy="13" r="1.200" fill="#444"/></g><path d="M11 1.3l2.8 1.2-1.6 1.6z" fill="#d8362a"/><path d="M4.5 6.3l6.8-.2" stroke="#9a9a9a" stroke-width="2.2"/></svg>
<span class="t" style="left:141.8px;top:223px;transform:scaleX(0.797);transform-origin:0 0;">Sales Orders</span>
<svg class="i" style="left:122px;top:245px" width="16" height="16" viewBox="0 0 16 16"><g transform="translate(1.6 0.6) scale(0.92)"><path d="M0 3.5l6-2.5 6 2v7l-6.5 3-5.5-2.5z" fill="#d8962a"/><path d="M0 3.5l5.5 2.3 6.5-2.8-6-2z" fill="#f7d27a"/><path d="M5.5 5.8v7.2l6.5-3v-7z" fill="#c07c16"/><path d="M0 3.5l5.5 2.3v7.2l-5.5-2.5z" fill="#eaae42"/></g><path d="M8 9.2h1.3l.7 3h3.6l.8-2.4h-4.6" fill="none" stroke="#2b5fc4" stroke-width="1.1"/><circle cx="10.6" cy="13.8" r=".9" fill="#2b5fc4"/><circle cx="13.2" cy="13.8" r=".9" fill="#2b5fc4"/></svg>
<span class="t" style="left:141.8px;top:248px;transform:scaleX(0.822);transform-origin:0 0;">Delivery Orders</span>
<svg class="i" style="left:122px;top:270px" width="16" height="16" viewBox="0 0 16 16"><rect x="2.800" y="1.800" width="10.200" height="12.700" fill="#fafdff" stroke="#86a8e4" stroke-width="1"/><text x="7.900" y="12" font-family="Liberation Sans" font-weight="bold" font-size="10.500" fill="#1f9a1f" stroke="#1f9a1f" stroke-width=".3" text-anchor="middle">$</text></svg>
<span class="t" style="left:141.8px;top:272px;transform:scaleX(0.806);transform-origin:0 0;">Sales Invoices</span>
<svg class="i" style="left:122px;top:294px" width="16" height="16" viewBox="0 0 16 16"><g transform="translate(0 1.6)"><path d="M1.500 3.800h2.300l.6 1.700" fill="none" stroke="#555" stroke-width="1.200"/><path d="M3.800 5.300h9.700l-1.600 5.400h-6.700z" fill="#8a8a8a" stroke="#666" stroke-width=".6"/><path d="M4.800 7h8M5.200 8.800h7M6.800 5.500l.5 5M9 5.500v5M11.300 5.500l-.5 5" stroke="#d4d4d4" stroke-width=".6"/><path d="M5.200 11.600h6.700" stroke="#555" stroke-width=".9"/><circle cx="6.300" cy="13" r="1.200" fill="#444"/><circle cx="10.800" cy="13" r="1.200" fill="#444"/></g><text x="8" y="7.3" font-family="Liberation Sans" font-weight="bold" font-size="8.5" fill="#1f9a1f" text-anchor="middle">$</text></svg>
<span class="t" style="left:141.8px;top:297px;transform:scaleX(0.774);transform-origin:0 0;">Cash Sales</span>
<svg class="i" style="left:122px;top:319px" width="16" height="16" viewBox="0 0 16 16"><g transform="rotate(12 8 8)"><rect x="2.5" y="2.5" width="11" height="10.5" fill="#eec98a" stroke="#c99a4e" stroke-width=".7"/><path d="M4.3 7.5h7.4M4.3 9.5h7.4M4.3 11.3h5" stroke="#c9a064" stroke-width=".7"/><circle cx="8" cy="4.3" r="1.5" fill="#d8362a"/><circle cx="7.6" cy="3.9" r=".5" fill="#f8a8a0"/></g></svg>
<span class="t" style="left:141.8px;top:322px;transform:scaleX(0.804);transform-origin:0 0;">Sales Debit Notes</span>
<svg class="i" style="left:122px;top:344px" width="16" height="16" viewBox="0 0 16 16"><g transform="rotate(12 8 8)"><rect x="2.5" y="2.5" width="11" height="10.5" fill="#eec98a" stroke="#c99a4e" stroke-width=".7"/><path d="M4.3 7.5h7.4M4.3 9.5h7.4M4.3 11.3h5" stroke="#c9a064" stroke-width=".7"/><circle cx="8" cy="4.3" r="1.5" fill="#d8362a"/><circle cx="7.6" cy="3.9" r=".5" fill="#f8a8a0"/></g></svg>
<span class="t" style="left:141.8px;top:346px;transform:scaleX(0.804);transform-origin:0 0;">Sales Credit Notes</span>
<svg class="i" style="left:122px;top:369px" width="16" height="16" viewBox="0 0 16 16"><path d="M1.2 7.2l6-5.7h5.3v2.2" fill="none" stroke="#d9261c" stroke-width="1.8"/><path d="M1.2 7.2l5 5" stroke="#d9261c" stroke-width="1.8"/><path d="M3 7.2l4.6-4.3h3.6v3l-4.5 4.6z" fill="#e8463a"/><circle cx="9.7" cy="3.9" r="1" fill="#fff"/><circle cx="9.6" cy="8.6" r="2.1" fill="#2566cc"/><path d="M6.199999999999999 14.899999999999999q0-3.9 3.4-3.9q3.4 0 3.4 3.9z" fill="#2566cc"/><path d="M8.9 11.5h1.4v3.4h-1.4z" fill="#dfeaff"/></svg>
<span class="t" style="left:141.8px;top:371px;transform:scaleX(0.794);transform-origin:0 0;">Customer Pricing Rules</span>
<svg class="i" style="left:251.800px;top:382.500px" width="6.200" height="3.500" viewBox="0 0 6.200 3.500"><path d="M0 0h6.200L3.100 3.500z" fill="#6a6a6a"/></svg>
<div style="left:127px;top:393px;width:3px;height:1px;background:#c8a878"></div>
<div style="left:185.3px;top:398px;width:1.5px;height:1.5px;background:#a0a0a0"></div>
<div style="left:189.60000000000002px;top:398px;width:1.5px;height:1.5px;background:#a0a0a0"></div>
<div style="left:193.9px;top:398px;width:1.5px;height:1.5px;background:#a0a0a0"></div>
<div style="left:115px;top:402px;width:149px;height:1px;background:#d6d6d4"></div>
<div style="left:115px;top:516px;width:150px;height:27.5px;background:#d3d3d1"></div>
<svg class="i" style="left:123px;top:409px" width="16" height="16" viewBox="0 0 16 16"><rect x="1.5" y="2" width="13" height="12" fill="#fdf6ec" stroke="#6f86c8" stroke-width="1"/><rect x="3.3" y="3.8" width="4" height="4" fill="#f0a040" stroke="#d07818" stroke-width=".5"/><rect x="8.7" y="3.8" width="4" height="4" fill="#f0a040" stroke="#d07818" stroke-width=".5"/><rect x="3.3" y="9.3" width="9.4" height="3" fill="#f6c890" stroke="#d07818" stroke-width=".5"/></svg>
<span class="t n13" style="left:144.1px;top:410px;transform:scaleX(0.876);transform-origin:0 0;">Dashboard</span>
<svg class="i" style="left:123px;top:437px" width="16" height="16" viewBox="0 0 16 16"><path d="M3.5 2v8M6.3 1.5v8.5M9.3 1.5v8.5M12 2v8" stroke="#5f7f9f" stroke-width="1.3"/><path d="M4.8 2.5v7M7.8 2.5v7M10.7 2.5v7" stroke="#3f9f6f" stroke-width=".8"/><path d="M1.5 9.5h13l-.8 4.5H2.3z" fill="#a8622a"/><path d="M1.5 9.5h13v1.5h-13z" fill="#c98850"/></svg>
<span class="t n13" style="left:144.1px;top:438px;transform:scaleX(0.844);transform-origin:0 0;">General Ledger</span>
<svg class="i" style="left:123px;top:466px" width="16" height="16" viewBox="0 0 16 16"><circle cx="8" cy="4.7" r="3" fill="#e8b890"/><path d="M4.8 4.3q0-3.3 3.2-3.3q3.2 0 3.2 3.3q-1.5-1.5-3.2-1.3q-1.7-.2-3.2 1.3z" fill="#5a3218"/><path d="M2 14.5q0-5.5 6-5.5q6 0 6 5.5z" fill="#33333b"/><path d="M6.5 9.2l1.5 3.5 1.5-3.5z" fill="#f4f4f4"/><path d="M7.6 10l.4 3.6.4-3.6z" fill="#c02a2a"/></svg>
<span class="t n13" style="left:144.1px;top:466px;transform:scaleX(0.893);transform-origin:0 0;">Customer</span>
<svg class="i" style="left:123px;top:494px" width="16" height="16" viewBox="0 0 16 16"><path d="M5.5 3.2h9.3v7h-9.3z" fill="#c4c8cf" stroke="#8a9099" stroke-width=".6"/><path d="M5.5 3.2l9.3 0-1.5-1.5h-6.5z" fill="#e4e6ea"/><path d="M1.2 8.2q.3-2.5 2.8-2.7h2.2v5.7h-5z" fill="#3a86e0" stroke="#2a64b8" stroke-width=".5"/><path d="M2.3 8q.2-1.3 1.7-1.4h1.2v1.5z" fill="#cfe4fb"/><circle cx="4" cy="11.7" r="1.7" fill="#3a3a3a"/><circle cx="4" cy="11.7" r=".7" fill="#bbb"/><circle cx="11.5" cy="11.7" r="1.7" fill="#3a3a3a"/><circle cx="11.5" cy="11.7" r=".7" fill="#bbb"/></svg>
<span class="t n13" style="left:144.1px;top:494px;transform:scaleX(0.838);transform-origin:0 0;">Supplier</span>
<svg class="i" style="left:123px;top:522px" width="16" height="16" viewBox="0 0 16 16"><path d="M5.5 6.5l5-4.5 4.5 5-5 4.8z" fill="#e8b088" stroke="#d49468" stroke-width=".5"/><circle cx="10.3" cy="4.3" r=".8" fill="#fff"/><path d="M3 2.5q-2.5 5 0 11" fill="none" stroke="#d8261c" stroke-width="1.5"/><path d="M5.8 3.5q-1.8 4 .2 8.500" fill="none" stroke="#e85a4a" stroke-width="1"/></svg>
<span class="t n13" style="left:144.1px;top:523px;transform:scaleX(0.77);transform-origin:0 0;">Sales</span>
<svg class="i" style="left:123px;top:550px" width="16" height="16" viewBox="0 0 16 16"><rect x="1.5" y="1.5" width="10" height="8.5" fill="#f4f8fe" stroke="#2f6fd0" stroke-width="1.2"/><path d="M1.5 4.3h10M4.8 4.3v5.7M8.2 4.3v5.7M1.5 7h10" stroke="#2f6fd0" stroke-width=".8"/><rect x="1.5" y="1.5" width="10" height="2.3" fill="#2f6fd0"/><path d="M1.5 12h4.5v2h-4.5z" fill="#2f6fd0"/><circle cx="11.3" cy="8.3" r="2.1" fill="#2f78d8"/><path d="M7.9 14.600000000000001q0-3.9 3.4-3.9q3.4 0 3.4 3.9z" fill="#2f78d8"/></svg>
<span class="t n13" style="left:144.1px;top:551px;transform:scaleX(0.794);transform-origin:0 0;">POS</span>
<svg class="i" style="left:123px;top:578px" width="16" height="16" viewBox="0 0 16 16"><path d="M1 4h2.2l1.2 6.500h8l1.6-5.5h-10.300" fill="#f2b21c" stroke="#d89408" stroke-width=".8"/><path d="M5 6.300h8M5.300 8.200h7.500M6.800 5.500v4.500M9 5.500v4.500M11.200 5.500v4.500" stroke="#fbe08a" stroke-width=".7"/><path d="M5.500 4.500l2-1.800 2 1.300 2.500-1.500 1 2" fill="#e87818" stroke="#c85a08" stroke-width=".5"/><circle cx="5.800" cy="12.600" r="1.200" fill="#444"/><circle cx="11.600" cy="12.600" r="1.200" fill="#444"/></svg>
<span class="t n13" style="left:144.1px;top:579px;transform:scaleX(0.85);transform-origin:0 0;">Purchases</span>
<svg class="i" style="left:123px;top:606px" width="16" height="16" viewBox="0 0 16 16"><g transform="translate(1.5 1.3) scale(1.0)"><path d="M0 3.5l6-2.5 6 2v7l-6.5 3-5.5-2.5z" fill="#d8962a"/><path d="M0 3.5l5.5 2.3 6.5-2.8-6-2z" fill="#f7d27a"/><path d="M5.5 5.8v7.2l6.5-3v-7z" fill="#c07c16"/><path d="M0 3.5l5.5 2.3v7.2l-5.5-2.5z" fill="#eaae42"/></g></svg>
<span class="t n13" style="left:144.1px;top:607px;transform:scaleX(0.885);transform-origin:0 0;">Stocks</span>
<svg class="i" style="left:123px;top:634px" width="16" height="16" viewBox="0 0 16 16"><rect x="3" y="3" width="11.500" height="12" fill="#ececec" stroke="#dcdcdc" stroke-width=".6"/><path d="M5 10.200l4.800-4.200 2.300 2.500-4.800 4.200z" fill="#1c1c1c"/><path d="M6.600 9.800l1.500 1.600" stroke="#fff" stroke-width=".8"/><rect x="11" y="1.200" width="4.300" height="4.300" fill="#2f7fe8"/><path d="M11 1.200l4.300 4.300" stroke="#8fc0fb" stroke-width=".8"/></svg>
<span class="t n13" style="left:144.1px;top:635px;transform:scaleX(0.806);transform-origin:0 0;">GST/SST</span>
<svg class="i" style="left:123px;top:663px" width="16" height="16" viewBox="0 0 16 16"><circle cx="5.500" cy="5.500" r="4.300" fill="#f0b070" stroke="#d8823a" stroke-width=".8"/><circle cx="5.500" cy="5.500" r="2.300" fill="none" stroke="#d8823a" stroke-width=".9"/><circle cx="10" cy="10.300" r="4.500" fill="url(#gGreen)" stroke="#3a9a22" stroke-width=".7"/><text x="10" y="13" font-family="Liberation Sans" font-weight="bold" font-size="7" fill="#e8ffd8" text-anchor="middle">$</text></svg>
<span class="t n13" style="left:144.1px;top:663px;transform:scaleX(0.895);transform-origin:0 0;">Advance Currency</span>
<svg class="i" style="left:123px;top:691px" width="16" height="16" viewBox="0 0 16 16"><rect x="1.500" y="1.500" width="13" height="13" rx="2.500" fill="#e8eefb" stroke="#9ab0e0" stroke-width=".9"/><path d="M12 7A4.200 4.200 0 0 0 4.500 5.500M4 9a4.200 4.200 0 0 0 7.500 1.500" fill="none" stroke="#6f90d8" stroke-width="1.400"/><path d="M3.300 3.300v3h3zM12.700 12.700v-3h-3z" fill="#6f90d8"/></svg>
<span class="t n13" style="left:144.1px;top:692px;transform:scaleX(0.869);transform-origin:0 0;">Recurring</span>
<svg class="i" style="left:123px;top:719px" width="16" height="16" viewBox="0 0 16 16"><rect x="1.500" y="2.500" width="13" height="11" fill="#fbfcff" stroke="#6f86c8" stroke-width="1"/><path d="M3 10.500l2.800-3.500 2.200 2 2.200-3.500 2.800 2.500" fill="none" stroke="#e0322a" stroke-width="1.300"/></svg>
<span class="t n13" style="left:144.1px;top:720px;transform:scaleX(0.859);transform-origin:0 0;">Amoeba</span>
<svg class="i" style="left:123px;top:747px" width="16" height="16" viewBox="0 0 16 16"><rect x="1.500" y="5" width="3.500" height="9" fill="#e89a1c" stroke="#b86c08" stroke-width=".5"/><path d="M5 6h3l2.500-3.500q1.500 0 1 2l-.5 1.500h3q1 .5 .5 1.500l-1.300 5.500h-8.200z" fill="#f6dca8" stroke="#c8964a" stroke-width=".6"/><path d="M3 3l1-2M6 2.500l.3-2M9 1.500l1-1.500" stroke="#555" stroke-width=".8"/><rect x="2" y="11" width="2" height="2" fill="#333"/></svg>
<span class="t n13" style="left:144.1px;top:748px;transform:scaleX(0.886);transform-origin:0 0;">Biling Approval</span>
<svg class="i" style="left:123px;top:775px" width="16" height="16" viewBox="0 0 16 16"><path d="M1.500 2h4l1 1.500h4v8h-9z" fill="#f0c860" stroke="#c89a28" stroke-width=".7"/><rect x="5.500" y="5.500" width="8" height="8.500" fill="#f4f8fe" stroke="#7f98c8" stroke-width=".7"/><circle cx="9" cy="9" r="2.200" fill="#dfeafb" stroke="#4a6ab8" stroke-width="1"/><path d="M10.600 10.600l3 3" stroke="#4a6ab8" stroke-width="1.500"/></svg>
<span class="t n13" style="left:144.1px;top:776px;transform:scaleX(0.877);transform-origin:0 0;">Default</span>
<svg class="i" style="left:123px;top:803px" width="16" height="16" viewBox="0 0 16 16"><rect x="3" y="1.500" width="10" height="13" fill="#f8faff" stroke="#8fa4d8" stroke-width="1"/><path d="M5 4.500h2.500M8.500 4.500h2.500M5 7h2.500M8.500 7h2.500M5 9.500h2.500M8.500 9.500h2.500M5 12h2.500M8.500 12h2.500" stroke="#9fb4e4" stroke-width="1.100"/></svg>
<span class="t n13" style="left:144.1px;top:804px;transform:scaleX(0.866);transform-origin:0 0;">Points</span>
<svg class="i" style="left:123px;top:832px" width="16" height="16" viewBox="0 0 16 16"><rect x="3" y="3" width="11.500" height="12" fill="#ececec" stroke="#dcdcdc" stroke-width=".6"/><path d="M5 10.200l4.800-4.200 2.300 2.500-4.800 4.200z" fill="#1c1c1c"/><path d="M6.600 9.800l1.500 1.600" stroke="#fff" stroke-width=".8"/><rect x="11" y="1.200" width="4.300" height="4.300" fill="#2f7fe8"/><path d="M11 1.200l4.300 4.300" stroke="#8fc0fb" stroke-width=".8"/></svg>
<span class="t n13" style="left:144.1px;top:832px;transform:scaleX(0.939);transform-origin:0 0;">WTax</span>
<div style="left:115px;top:853px;width:149px;height:1px;background:#d0d0ce"></div>
<div style="left:238px;top:872px;width:3px;height:3px;background:#555;border-radius:2px"></div>
<div style="left:245px;top:872px;width:3px;height:3px;background:#555;border-radius:2px"></div>
<div style="left:252px;top:872px;width:3px;height:3px;background:#555;border-radius:2px"></div>
<div style="left:266px;top:140px;width:1538px;height:751px;background:#f3f3f1"></div>
<div style="left:266px;top:141px;width:1538px;height:20.5px;background:#f3f3f1;border-bottom:1.500px solid #cfcfcd"></div>
<div style="left:266px;top:141px;width:489px;height:19px;background:#e6e6e4"></div>
<div style="left:880px;top:141px;width:1px;height:19px;background:#dadad8"></div>
<div style="left:755px;top:141px;width:125px;height:21px;background:#f3f3f1;border-left:1px solid #d6d6d4"></div>
<div style="left:387.5px;top:141px;width:1px;height:18px;background:#d4d4d2"></div>
<div style="left:506.5px;top:141px;width:1px;height:18px;background:#d4d4d2"></div>
<div style="left:631px;top:141px;width:1px;height:18px;background:#d4d4d2"></div>
<svg class="i" style="left:271px;top:144px" width="13" height="13" viewBox="0 0 13 13"><g transform="translate(6.500 6.500)"><g stroke="#5a6a8a" stroke-width="2"><path d="M0-6v12M-6 0h12M-4.200-4.200l8.400 8.400M4.200-4.200l-8.400 8.400"/></g><circle r="4.300" fill="#f0f3fa" stroke="#5a6a8a" stroke-width="1"/><circle r="1.600" fill="none" stroke="#5a6a8a" stroke-width="1"/></g></svg>
<span class="t b" style="left:287.3px;top:144px;transform:scaleX(0.895);transform-origin:0 0;clip-path:inset(0 4.5px 0 0)">GST/SST Setting</span>
<span class="t b" style="left:394.3px;top:144px;transform:scaleX(0.88);transform-origin:0 0;">Chart Of Accounts</span>
<svg class="i" style="left:514px;top:144px" width="14" height="14" viewBox="0 0 14 14"><rect x="1" y=".8" width="9" height="11" fill="#fafdff" stroke="#86a8e4" stroke-width=".9"/><text x="5.600" y="9.500" font-family="Liberation Sans" font-weight="bold" font-size="8" fill="#1f9a1f" text-anchor="middle">$</text><path d="M8 9l2.500-2 3 5.500-3.500 1.500z" fill="#f0b050" stroke="#c88420" stroke-width=".5"/></svg>
<span class="t b" style="left:530px;top:144px;transform:scaleX(0.942);transform-origin:0 0;clip-path:inset(0 3px 0 0)">OR2106/015 - G</span>
<span class="t b" style="left:637.7px;top:144px;transform:scaleX(0.93);transform-origin:0 0;">*&nbsp; - Debtor Deposit</span>
<svg class="i" style="left:762px;top:143px" width="13" height="13" viewBox="0 0 13 13"><rect x="1" y=".8" width="10" height="11.600" fill="#fafdff" stroke="#86a8e4" stroke-width=".9"/><text x="6" y="10" font-family="Liberation Sans" font-weight="bold" font-size="9.500" fill="#1f9a1f" stroke="#1f9a1f" stroke-width=".4" text-anchor="middle">$</text></svg>
<span class="t b" style="left:779.3px;top:144px;transform:scaleX(0.905);transform-origin:0 0;">*&nbsp; - Sales Invoic</span>
<svg class="i" style="left:865px;top:146px" width="9" height="9" viewBox="0 0 9 9"><path d="M1 1l7 7M8 1l-7 7" stroke="#666" stroke-width="1.1"/></svg>
<svg class="i" style="left:1795px;top:149px" width="5" height="3" viewBox="0 0 5 3"><path d="M0 0h5L2.5 3z" fill="#555"/></svg>
<svg class="i" style="left:283px;top:163px" width="24" height="28" viewBox="0 0 24 28"><rect x="1.700" y="1.700" width="20.300" height="24.600" fill="url(#gDoc)" stroke="#86a8e4" stroke-width="1.200"/><path d="M4.500 7h14" stroke="#a9afba" stroke-width="2"/><path d="M4.500 10h7" stroke="#d0d4dc" stroke-width="1.200"/><text x="14.300" y="24" font-family="Liberation Sans" font-weight="bold" font-size="17.500" fill="#1f9a1f" stroke="#1f9a1f" stroke-width=".4" text-anchor="middle">$</text></svg>
<span class="t" style="left:325px;top:165px;font-size:22px;transform:scaleX(1.012);transform-origin:0 0;line-height:26px;color:#333">Sales Invoices</span>
<div style="left:277px;top:222px;width:1517px;height:130px;border:1px solid #b4b4b2;background:#f3f3f1"></div>
<div class="tab" style="left:277px;top:202px;width:41px;height:21px;background:#f3f3f1;border-bottom:none"></div>
<span class="t" style="left:282.7px;top:207px;transform:scaleX(0.791);transform-origin:0 0;">Details</span>
<div class="tab" style="left:317px;top:204px;width:50px;height:19px;"></div>
<span class="t" style="left:321.4px;top:208px;transform:scaleX(0.8);transform-origin:0 0;">Customer</span>
<div class="tab" style="left:366px;top:204px;width:63px;height:19px;"></div>
<span class="t" style="left:372.2px;top:208px;transform:scaleX(0.806);transform-origin:0 0;">DO Address</span>
<div class="tab" style="left:428px;top:204px;width:41px;height:19px;"></div>
<span class="t" style="left:432.7px;top:208px;transform:scaleX(0.846);transform-origin:0 0;">Others</span>
<div class="tab" style="left:468px;top:204px;width:88px;height:19px;"></div>
<span class="t" style="left:472.5px;top:208px;transform:scaleX(0.782);transform-origin:0 0;">Commission Rates</span>
<div class="tab" style="left:555px;top:204px;width:35px;height:19px;"></div>
<span class="t" style="left:560.3px;top:208px;transform:scaleX(0.765);transform-origin:0 0;">Notes</span>
<div class="tab" style="left:589px;top:204px;width:30px;height:19px;"></div>
<span class="t" style="left:593.3px;top:208px;transform:scaleX(0.782);transform-origin:0 0;">Files</span>
<div class="tab" style="left:618px;top:204px;width:54px;height:19px;"></div>
<span class="t" style="left:623.3px;top:208px;transform:scaleX(0.815);transform-origin:0 0;">Approvals</span>
<div class="tab" style="left:671px;top:204px;width:29px;height:19px;"></div>
<span class="t" style="left:675.7px;top:208px;transform:scaleX(0.917);transform-origin:0 0;">Info</span>
<div class="tab" style="left:699px;top:204px;width:44px;height:19px;"></div>
<span class="t" style="left:704px;top:208px;transform:scaleX(0.77);transform-origin:0 0;">JomPay</span>
<div class="tab" style="left:742px;top:204px;width:48px;height:19px;"></div>
<span class="t" style="left:746.7px;top:208px;transform:scaleX(0.818);transform-origin:0 0;">Renewal</span>
<span class="t b" style="left:285.5px;top:235.7px;transform:scaleX(0.902);transform-origin:0 0;">Customer</span>
<div class="fld" style="left:446.5px;top:232px;width:284.5px;height:17.8px;"></div>
<span class="t" style="left:449.6px;top:235px;transform:scaleX(0.837);transform-origin:0 0;">700-W002</span>
<div class="dd" style="left:721px;top:240px;width:0px;height:0px;"></div>
<span class="t b" style="left:739.3px;top:235.7px;transform:scaleX(0.891);transform-origin:0 0;">Currency</span>
<div class="ro" style="left:900.3px;top:232px;width:208.7px;height:17.8px;"></div>
<span class="t g" style="left:903.3px;top:235px;transform:scaleX(0.783);transform-origin:0 0;">RM</span>
<div class="dd" style="left:1099px;top:240px;width:0px;height:0px;border-top-color:#aaa"></div>
<span class="t b" style="left:285.5px;top:256.8px;transform:scaleX(0.924);transform-origin:0 0;">To</span>
<div class="fld" style="left:446.5px;top:253.4px;width:284.5px;height:17.8px;"></div>
<span class="t" style="left:449.6px;top:256.4px;transform:scaleX(0.763);transform-origin:0 0;">WEST DIGITAL SDN BHD</span>
<span class="t b" style="left:739.3px;top:256.8px;transform:scaleX(0.939);transform-origin:0 0;">Attention</span>
<div class="fld" style="left:900.3px;top:253.4px;width:208.7px;height:17.8px;"></div>
<span class="t" style="left:903.3px;top:256.4px;transform:scaleX(0.736);transform-origin:0 0;">MR.STEVEN</span>
<span class="t b" style="left:285.5px;top:277.9px;transform:scaleX(0.931);transform-origin:0 0;">Delivery Term</span>
<div class="fld" style="left:446.5px;top:274.4px;width:284.5px;height:17.8px;"></div>
<span class="t b" style="left:739.3px;top:277.9px;transform:scaleX(0.92);transform-origin:0 0;">Agent</span>
<div class="fld" style="left:900.3px;top:274.4px;width:208.7px;height:17.8px;"></div>
<span class="t" style="left:903.3px;top:277.4px;transform:scaleX(0.766);transform-origin:0 0;">CINDY</span>
<div class="dd" style="left:1099px;top:282.4px;width:0px;height:0px;"></div>
<span class="t b" style="left:285.5px;top:299.0px;transform:scaleX(0.971);transform-origin:0 0;">Term</span>
<div class="fld" style="left:446.5px;top:295.4px;width:284.5px;height:17.8px;"></div>
<span class="t" style="left:449.6px;top:298.4px;transform:scaleX(0.837);transform-origin:0 0;">C.O.D.</span>
<div class="dd" style="left:721px;top:303.4px;width:0px;height:0px;"></div>
<span class="t b" style="left:739.3px;top:299.0px;transform:scaleX(0.831);transform-origin:0 0;">Our DO No</span>
<div class="fld" style="left:900.3px;top:295.4px;width:208.7px;height:17.8px;"></div>
<span class="t b" style="left:285.5px;top:320.1px;transform:scaleX(0.879);transform-origin:0 0;">Location</span>
<div class="fld" style="left:446.5px;top:316.6px;width:284.5px;height:17.8px;"></div>
<div class="dd" style="left:721px;top:324.6px;width:0px;height:0px;"></div>
<span class="t b" style="left:739.3px;top:320.1px;transform:scaleX(0.933);transform-origin:0 0;">Project</span>
<div class="fld" style="left:900.3px;top:316.6px;width:208.7px;height:17.8px;"></div>
<div class="dd" style="left:1099px;top:324.6px;width:0px;height:0px;"></div>
<span class="t b" style="left:1118px;top:237px;transform:scaleX(0.93);transform-origin:0 0;">Rate</span>
<div class="ro" style="left:1279px;top:232px;width:505px;height:19px;"></div>
<span class="t" style="left:1659.8px;top:236px;transform:scaleX(0.826);transform-origin:0 0;">1.00000000</span>
<span class="t" style="left:1716px;top:236px;transform:scaleX(0.811);transform-origin:0 0;">Exchange Rate</span>
<span class="t b" style="left:1118px;top:260px;transform:scaleX(0.895);transform-origin:0 0;">Doc Date</span>
<div class="fld" style="left:1279px;top:256px;width:505px;height:18px;"></div>
<span class="t" style="left:1283px;top:259px;transform:scaleX(0.839);transform-origin:0 0;">16/06/2021</span>
<span class="t b" style="left:1118px;top:281px;transform:scaleX(0.887);transform-origin:0 0;">Invoice No.</span>
<div class="fld" style="left:1279px;top:277px;width:505px;height:18px;"></div>
<span class="t g" style="left:1282.2px;top:280px;transform:scaleX(0.807);transform-origin:0 0;">INV00022</span>
<div class="dd" style="left:1760px;top:264px;width:0px;height:0px;"></div>
<div style="left:1773px;top:265px;width:2px;height:1px;background:#555"></div>
<div style="left:1776px;top:265px;width:2px;height:1px;background:#555"></div>
<div style="left:1779px;top:265px;width:2px;height:1px;background:#555"></div>
<div class="dd" style="left:1760px;top:285px;width:0px;height:0px;"></div>
<div style="left:1773px;top:286px;width:2px;height:1px;background:#555"></div>
<div style="left:1776px;top:286px;width:2px;height:1px;background:#555"></div>
<div style="left:1779px;top:286px;width:2px;height:1px;background:#555"></div>
<span class="t b" style="left:1118px;top:302px;transform:scaleX(0.885);transform-origin:0 0;">Reference No</span>
<div class="fld" style="left:1279px;top:298px;width:505px;height:18px;"></div>
<div class="fld" style="left:1120px;top:327px;width:12px;height:13px;"></div>
<span class="t" style="left:1134.9px;top:327px;transform:scaleX(0.837);transform-origin:0 0;">Tax Inclusive</span>
<div class="fld" style="left:1328px;top:327px;width:12px;height:13px;"></div>
<span class="t" style="left:1343px;top:327px;transform:scaleX(0.814);transform-origin:0 0;">Rounding</span>
<div style="left:268px;top:354px;width:1533px;height:480px;background:#cfdcf5"></div>
<div style="left:276px;top:400px;width:1px;height:432px;background:#c6d0e4"></div>
<div style="left:277px;top:355px;width:1516px;height:23px;background:#f3f3f1"></div>
<div style="left:277px;top:377px;width:1516px;height:23px;background:#f3f3f1;border-top:1px solid #dcdcda;border-bottom:1px solid #c4c4c2"></div>
<div style="left:277px;top:400px;width:1516px;height:432px;background:#fff"></div>
<svg class="i" style="left:281px;top:359px" width="14" height="14" viewBox="0 0 14 14"><path d="M4.6 1.2H12.5V12.5H1.8V4.0Z" fill="#f4f9ff" stroke="#5f8fd8" stroke-width="1"/><path d="M1.800 4h2.800v-2.800" fill="none" stroke="#5f8fd8" stroke-width=".8"/></svg>
<div style="left:301px;top:358px;width:1px;height:16px;background:#d0d0ce"></div>
<div class="fld" style="left:307px;top:355px;width:132px;height:21px;"></div>
<span class="t g" style="left:311px;top:360px;transform:scaleX(0.825);transform-origin:0 0;">Scan Item..</span>
<svg class="i" style="left:422px;top:360px" width="13" height="13" viewBox="0 0 13 13"><rect x=".500" y="1.200" width="12" height="9.600" rx=".8" fill="#f4f6fd" stroke="#6f86c8" stroke-width=".9"/><path d="M2.800 3.300v5.400M4.600 3.300v5.400M6.500 3.300v5.400M8.300 3.300v5.400M10.200 3.300v5.400" stroke="#333" stroke-width="1.100"/></svg>
<svg class="i" style="left:449px;top:358px" width="16" height="16" viewBox="0 0 16 16"><path d="M2.500 3l11 10.500M13.500 3l-11 10.500" stroke="#c8181a" stroke-width="2.200" stroke-linecap="round"/></svg>
<svg class="i" style="left:472px;top:358px" width="16" height="16" viewBox="0 0 16 16"><path d="M5.800 2.800h4.400v5h2.600l-4.800 5.700-4.800-5.700h2.600z" fill="#7ab4f2" stroke="#3f7fd0" stroke-width=".8"/><path d="M6.500 3.500h3v2.500h-3z" fill="#c4defb"/></svg>
<svg class="i" style="left:495px;top:358px" width="16" height="16" viewBox="0 0 16 16"><path d="M5.800 13.500h4.400v-5h2.600l-4.800-5.700-4.800 5.700h2.600z" fill="#7ab4f2" stroke="#3f7fd0" stroke-width=".8"/><path d="M8 4.300l2.600 3.200h-5.200z" fill="#c4defb"/></svg>
<svg class="i" style="left:522px;top:358px" width="16" height="16" viewBox="0 0 16 16"><rect x="7.500" y="2.500" width="8" height="6.500" fill="#e8ecf4" stroke="#6f7f9f" stroke-width=".7"/><rect x="9.300" y="4" width="4.400" height="2.300" fill="#8aa0c8"/><path d="M1 2.500v8q2.500 1.500 5 0v-8z" fill="#e8a830" stroke="#b87c10" stroke-width=".6"/><ellipse cx="3.500" cy="2.500" rx="2.500" ry="1.100" fill="#f8d880" stroke="#b87c10" stroke-width=".5"/><path d="M6 8v5.500q2.300 1.300 4.600 0v-5.500z" fill="#e8a830" stroke="#b87c10" stroke-width=".6"/><ellipse cx="8.300" cy="8" rx="2.300" ry="1" fill="#f8d880" stroke="#b87c10" stroke-width=".5"/></svg>
<svg class="i" style="left:545px;top:358px" width="16" height="16" viewBox="0 0 16 16"><g transform="translate(2.2 1.8) scale(0.98)"><path d="M0 3.5l6-2.5 6 2v7l-6.5 3-5.5-2.5z" fill="#d8962a"/><path d="M0 3.5l5.5 2.3 6.5-2.8-6-2z" fill="#f7d27a"/><path d="M5.5 5.8v7.2l6.5-3v-7z" fill="#c07c16"/><path d="M0 3.5l5.5 2.3v7.2l-5.5-2.5z" fill="#eaae42"/></g></svg>
<svg class="i" style="left:572px;top:358px" width="16" height="16" viewBox="0 0 16 16"><rect x="2" y="2" width="10" height="10" fill="#dcdcdc" stroke="#a8a8a8" stroke-width=".8"/><path d="M3.500 4.500h7M3.500 6.500h7M3.500 8.500h7" stroke="#a0a0a0" stroke-width=".9"/><rect x="7" y="8" width="7" height="5.500" fill="#c4c4c4" stroke="#a0a0a0" stroke-width=".7"/></svg>
<svg class="i" style="left:599px;top:358px" width="16" height="16" viewBox="0 0 16 16"><path d="M1.2 7.2l6-5.7h5.3v2.2" fill="none" stroke="#d9261c" stroke-width="1.8"/><path d="M1.2 7.2l5 5" stroke="#d9261c" stroke-width="1.8"/><path d="M3 7.2l4.6-4.3h3.6v3l-4.5 4.6z" fill="#e8463a"/><circle cx="9.7" cy="3.9" r="1" fill="#fff"/><circle cx="9.6" cy="8.6" r="2.1" fill="#2566cc"/><path d="M6.199999999999999 14.899999999999999q0-3.9 3.4-3.9q3.4 0 3.4 3.9z" fill="#2566cc"/><path d="M8.9 11.5h1.4v3.4h-1.4z" fill="#dfeaff"/></svg>
<svg class="i" style="left:622px;top:358px" width="16" height="16" viewBox="0 0 16 16"><circle cx="8.6" cy="8.3" r="5.6" fill="#eef4fb" stroke="#4f92df" stroke-width="1.7"/><path d="M1.2 3.2l5.3 1-3.6 3.8z" fill="#4f92df"/><path d="M2.5 7.3h4.5" stroke="#4f92df" stroke-width="1"/><path d="M9 8.2l-2.6 2.6" stroke="#444" stroke-width="1"/><path d="M9 8.2h4" stroke="#d23a2a" stroke-width=".9"/></svg>
<svg class="i" style="left:645px;top:358px" width="16" height="16" viewBox="0 0 16 16"><rect x="1.500" y="7" width="11" height="7" fill="#cfcfcf" stroke="#b0b0b0" stroke-width=".8"/><rect x="1.500" y="7" width="11" height="2" fill="#b4b4b4"/><path d="M8.500 6.500v-2.500q0-1.800 2.500-1.800q2.500 0 2.500 1.800v2" fill="none" stroke="#b4b4b4" stroke-width="1.600"/></svg>
<svg class="i" style="left:669px;top:358px" width="16" height="16" viewBox="0 0 16 16"><rect x="1.500" y="2.500" width="13" height="11" rx="1" fill="#f4f9ff" stroke="#3f7fd0" stroke-width="1.100"/><rect x="2" y="3" width="12" height="2.600" fill="#3f7fd0"/><path d="M4 9.500h2.500" stroke="#9a9a9a" stroke-width="1"/><rect x="8" y="8.300" width="4.500" height="2.400" fill="#fff" stroke="#aaa" stroke-width=".6"/></svg>
<div style="left:516px;top:358px;width:1px;height:16px;background:#d0d0ce"></div>
<div style="left:567px;top:358px;width:1px;height:16px;background:#d0d0ce"></div>
<div style="left:593px;top:358px;width:1px;height:16px;background:#d0d0ce"></div>
<div style="left:763px;top:358px;width:1px;height:16px;background:#d0d0ce"></div>
<div style="left:836px;top:358px;width:1px;height:16px;background:#d0d0ce"></div>
<div style="left:879px;top:358px;width:1px;height:16px;background:#d0d0ce"></div>
<span class="t" style="left:688.7px;top:359px;transform:scaleX(0.868);transform-origin:0 0;">View Variants</span>
<div class="dd" style="left:752px;top:365px;width:0px;height:0px;border-left-width:2.5px;border-right-width:2.5px"></div>
<svg class="i" style="left:769px;top:358px" width="16" height="16" viewBox="0 0 16 16"><circle cx="8" cy="8.2" r="6" fill="url(#gGray)" stroke="#a6a6a6" stroke-width=".8"/><path d="M8 4.999999999999999l3 3h-1.8v3.2h-2.4v-3.2h-3z" fill="#f0f0f0"/></svg>
<svg class="i" style="left:792px;top:358px" width="16" height="16" viewBox="0 0 16 16"><circle cx="8" cy="8.2" r="6" fill="url(#gGreen)" stroke="#2a8a1a" stroke-width=".8"/><path d="M8 11.399999999999999l3 -3h-1.8v-3.2h-2.4v3.2h-3z" fill="#fff"/></svg>
<svg class="i" style="left:814px;top:358px" width="16" height="16" viewBox="0 0 16 16"><g transform="translate(1.3 2.8) scale(0.98)"><path d="M1.5 3q1-2 3.3-1.3l1 5.5h-5.3zM12.5 3q-1-2-3.3-1.3l-1 5.5h5.3z" fill="#7088c8" stroke="#4a5f9a" stroke-width=".5"/><rect x="5.7" y="3.5" width="2.6" height="3" fill="#3f5590"/><circle cx="3.3" cy="8.2" r="2.9" fill="url(#gLens)" stroke="#41589a" stroke-width=".8"/><circle cx="10.7" cy="8.2" r="2.9" fill="url(#gLens)" stroke="#41589a" stroke-width=".8"/></g></svg>
<svg class="i" style="left:842px;top:358px" width="16" height="16" viewBox="0 0 16 16"><rect x="1" y="1.500" width="9" height="10" fill="#f4f9ff" stroke="#6f86c8" stroke-width=".9"/><rect x="5" y="5.5" width="10" height="9.5" rx="1" fill="#3f5fb0" stroke="#2f4a90" stroke-width=".8"/><rect x="7.2" y="5.9" width="5.6000000000000005" height="3.9899999999999998" fill="#f4f4f4"/><path d="M8.0 7.875h4.0" stroke="#999" stroke-width=".9"/><rect x="7.0" y="11.39" width="6.2" height="3.31" fill="#222836"/><rect x="11.4" y="12.149999999999999" width="1" height="1.9000000000000001" fill="#9cc8f4"/></svg>
<svg class="i" style="left:885px;top:358px" width="16" height="16" viewBox="0 0 16 16"><rect x="2" y="1.800" width="10" height="11.500" fill="#f8fbff" stroke="#7f98d0" stroke-width=".9"/><circle cx="10" cy="6.500" r="3.300" fill="#e4f0ff" stroke="#5f7fc0" stroke-width="1.100"/><path d="M7.800 9l-4 4.800" stroke="#d89a3a" stroke-width="1.800"/></svg>
<div class="dd" style="left:866px;top:365px;width:0px;height:0px;border-left-width:2.5px;border-right-width:2.5px"></div>
<div style="left:297px;top:379px;width:1px;height:20px;background:#b4b4b2"></div>
<div style="left:298px;top:379px;width:1px;height:20px;background:#e6e6e4"></div>
<div style="left:319px;top:379px;width:1px;height:20px;background:#b4b4b2"></div>
<div style="left:320px;top:379px;width:1px;height:20px;background:#e6e6e4"></div>
<div style="left:381px;top:379px;width:1px;height:20px;background:#b4b4b2"></div>
<div style="left:382px;top:379px;width:1px;height:20px;background:#e6e6e4"></div>
<div style="left:513px;top:379px;width:1px;height:20px;background:#b4b4b2"></div>
<div style="left:514px;top:379px;width:1px;height:20px;background:#e6e6e4"></div>
<div style="left:574px;top:379px;width:1px;height:20px;background:#b4b4b2"></div>
<div style="left:575px;top:379px;width:1px;height:20px;background:#e6e6e4"></div>
<div style="left:636px;top:379px;width:1px;height:20px;background:#b4b4b2"></div>
<div style="left:637px;top:379px;width:1px;height:20px;background:#e6e6e4"></div>
<div style="left:680px;top:379px;width:1px;height:20px;background:#b4b4b2"></div>
<div style="left:681px;top:379px;width:1px;height:20px;background:#e6e6e4"></div>
<div style="left:741px;top:379px;width:1px;height:20px;background:#b4b4b2"></div>
<div style="left:742px;top:379px;width:1px;height:20px;background:#e6e6e4"></div>
<div style="left:801px;top:379px;width:1px;height:20px;background:#b4b4b2"></div>
<div style="left:802px;top:379px;width:1px;height:20px;background:#e6e6e4"></div>
<div style="left:863px;top:379px;width:1px;height:20px;background:#b4b4b2"></div>
<div style="left:864px;top:379px;width:1px;height:20px;background:#e6e6e4"></div>
<div style="left:907px;top:379px;width:1px;height:20px;background:#b4b4b2"></div>
<div style="left:908px;top:379px;width:1px;height:20px;background:#e6e6e4"></div>
<div style="left:951px;top:379px;width:1px;height:20px;background:#b4b4b2"></div>
<div style="left:952px;top:379px;width:1px;height:20px;background:#e6e6e4"></div>
<div style="left:1012px;top:379px;width:1px;height:20px;background:#b4b4b2"></div>
<div style="left:1013px;top:379px;width:1px;height:20px;background:#e6e6e4"></div>
<div style="left:1056px;top:379px;width:1px;height:20px;background:#b4b4b2"></div>
<div style="left:1057px;top:379px;width:1px;height:20px;background:#e6e6e4"></div>
<div style="left:1100px;top:379px;width:1px;height:20px;background:#b4b4b2"></div>
<div style="left:1101px;top:379px;width:1px;height:20px;background:#e6e6e4"></div>
<div style="left:1163px;top:379px;width:1px;height:20px;background:#b4b4b2"></div>
<div style="left:1164px;top:379px;width:1px;height:20px;background:#e6e6e4"></div>
<span class="t g" style="left:323px;top:383px;transform:scaleX(0.796);transform-origin:0 0;">Stock Code</span>
<span class="t g" style="left:384.4px;top:383px;transform:scaleX(0.812);transform-origin:0 0;">Description</span>
<span class="t g" style="left:516.5px;top:383px;transform:scaleX(0.793);transform-origin:0 0;">Batch No</span>
<span class="t g" style="left:578px;top:383px;transform:scaleX(0.828);transform-origin:0 0;">F.Desc</span>
<span class="t g" style="left:639.3px;top:383px;transform:scaleX(0.838);transform-origin:0 0;">Qty</span>
<span class="t g" style="left:683.3px;top:383px;transform:scaleX(0.771);transform-origin:0 0;">UOM</span>
<span class="t g" style="left:745px;top:383px;transform:scaleX(0.788);transform-origin:0 0;">Unit Price</span>
<span class="t g" style="left:805px;top:383px;transform:scaleX(0.746);transform-origin:0 0;">Disc</span>
<span class="t g" style="left:867px;top:383px;transform:scaleX(0.815);transform-origin:0 0;">Amount</span>
<span class="t g" style="left:910.7px;top:383px;transform:scaleX(0.838);transform-origin:0 0;">Net</span>
<span class="t g" style="left:954.3px;top:383px;transform:scaleX(0.836);transform-origin:0 0;">Ref 2</span>
<span class="t g" style="left:1031.7px;top:383px;transform:scaleX(0.824);transform-origin:0 0;">Point</span>
<span class="t g" style="left:1060px;top:383px;transform:scaleX(0.862);transform-origin:0 0;">Total P...</span>
<span class="t g" style="left:1104px;top:383px;transform:scaleX(0.782);transform-origin:0 0;">Serial No</span>
<div style="left:304px;top:382px;width:13px;height:13px;border:1px solid #999;border-radius:50%;background:#fff"></div>
<div style="left:863px;top:400px;width:88px;height:142px;background:#f4a460"></div>
<div style="left:297px;top:400px;width:566px;height:23px;background:#cfdcf5"></div>
<div style="left:951px;top:400px;width:212px;height:23px;background:#cfdcf5"></div>
<div style="left:637px;top:401px;width:43px;height:22px;background:#fff"></div>
<div style="left:297px;top:423px;width:866px;height:1px;background:#cfcfcd"></div>
<div style="left:297px;top:447px;width:866px;height:1px;background:#cfcfcd"></div>
<div style="left:297px;top:471px;width:866px;height:1px;background:#cfcfcd"></div>
<div style="left:297px;top:495px;width:866px;height:1px;background:#cfcfcd"></div>
<div style="left:297px;top:518px;width:866px;height:1px;background:#cfcfcd"></div>
<div style="left:297px;top:542px;width:866px;height:1px;background:#cfcfcd"></div>
<div style="left:297px;top:423px;width:1px;height:119px;background:#cfcfcd"></div>
<div style="left:297px;top:401px;width:1px;height:22px;background:#c0cee9"></div>
<div style="left:319px;top:423px;width:1px;height:119px;background:#cfcfcd"></div>
<div style="left:319px;top:401px;width:1px;height:22px;background:#c0cee9"></div>
<div style="left:381px;top:423px;width:1px;height:119px;background:#cfcfcd"></div>
<div style="left:381px;top:401px;width:1px;height:22px;background:#c0cee9"></div>
<div style="left:513px;top:423px;width:1px;height:119px;background:#cfcfcd"></div>
<div style="left:513px;top:401px;width:1px;height:22px;background:#c0cee9"></div>
<div style="left:574px;top:423px;width:1px;height:119px;background:#cfcfcd"></div>
<div style="left:574px;top:401px;width:1px;height:22px;background:#c0cee9"></div>
<div style="left:636px;top:423px;width:1px;height:119px;background:#cfcfcd"></div>
<div style="left:636px;top:401px;width:1px;height:22px;background:#c0cee9"></div>
<div style="left:680px;top:423px;width:1px;height:119px;background:#cfcfcd"></div>
<div style="left:680px;top:401px;width:1px;height:22px;background:#c0cee9"></div>
<div style="left:741px;top:423px;width:1px;height:119px;background:#cfcfcd"></div>
<div style="left:741px;top:401px;width:1px;height:22px;background:#c0cee9"></div>
<div style="left:801px;top:423px;width:1px;height:119px;background:#cfcfcd"></div>
<div style="left:801px;top:401px;width:1px;height:22px;background:#c0cee9"></div>
<div style="left:863px;top:423px;width:1px;height:119px;background:#cfcfcd"></div>
<div style="left:907px;top:423px;width:1px;height:119px;background:#cfcfcd"></div>
<div style="left:907px;top:401px;width:1px;height:22px;background:#ec9d5c"></div>
<div style="left:951px;top:423px;width:1px;height:119px;background:#cfcfcd"></div>
<div style="left:1012px;top:423px;width:1px;height:119px;background:#cfcfcd"></div>
<div style="left:1012px;top:401px;width:1px;height:22px;background:#c0cee9"></div>
<div style="left:1056px;top:423px;width:1px;height:119px;background:#cfcfcd"></div>
<div style="left:1056px;top:401px;width:1px;height:22px;background:#c0cee9"></div>
<div style="left:1100px;top:423px;width:1px;height:119px;background:#cfcfcd"></div>
<div style="left:1100px;top:401px;width:1px;height:22px;background:#c0cee9"></div>
<div style="left:1163px;top:423px;width:1px;height:119px;background:#cfcfcd"></div>
<div style="left:1163px;top:401px;width:1px;height:22px;background:#c0cee9"></div>
<div style="left:907px;top:423px;width:1px;height:119px;background:#dccbb8"></div>
<div style="left:298px;top:400px;width:866px;height:23px;border:1px dotted #333"></div>
<svg class="i" style="left:285px;top:408px" width="4" height="7" viewBox="0 0 4 7"><path d="M0 0l4 3.5L0 7z" fill="#555"/></svg>
<span class="t" style="left:323px;top:405px;transform:scaleX(0.789);transform-origin:0 0;">AMD-XP/1...</span>
<span class="t" style="left:384.8px;top:405px;transform:scaleX(0.769);transform-origin:0 0;">AMD XP 1800</span>
<span class="t" style="left:666.7px;top:405px;transform:scaleX(0.727);transform-origin:0 0;">10</span>
<span class="t" style="left:683.3px;top:405px;transform:scaleX(0.774);transform-origin:0 0;">UNITS</span>
<span class="t" style="left:767.7px;top:405px;transform:scaleX(0.853);transform-origin:0 0;">685.00</span>
<span class="t" style="left:867.5px;top:405px;transform:scaleX(0.873);transform-origin:0 0;">6,850....</span>
<span class="t" style="left:912.3px;top:405px;transform:scaleX(0.847);transform-origin:0 0;">7,261....</span>
<svg class="i" style="left:598.5px;top:404px" width="14" height="14" viewBox="0 0 14 14"><rect x="1.500" y="5" width="10.500" height="7.500" fill="#fdfdfd" stroke="#555" stroke-width=".9"/><path d="M5.500 10l1-2.800 5.500-5.200 1.800 1.800-5.500 5.200z" fill="#f4c43a" stroke="#8a5a10" stroke-width=".5"/><path d="M11.200 2.800l1.200-1 1.700 1.700-1.100 1.100z" fill="#7a4ac8"/><path d="M5.500 10l.4-1.200.9.900z" fill="#333"/></svg>
<svg class="i" style="left:598.5px;top:427px" width="14" height="14" viewBox="0 0 14 14"><rect x="1.500" y="5" width="10.500" height="7.500" fill="#fdfdfd" stroke="#555" stroke-width=".9"/><path d="M5.500 10l1-2.800 5.500-5.200 1.800 1.800-5.500 5.200z" fill="#f4c43a" stroke="#8a5a10" stroke-width=".5"/><path d="M11.200 2.800l1.200-1 1.700 1.700-1.100 1.100z" fill="#7a4ac8"/><path d="M5.500 10l.4-1.200.9.900z" fill="#333"/></svg>
<svg class="i" style="left:598.5px;top:451px" width="14" height="14" viewBox="0 0 14 14"><rect x="1.500" y="5" width="10.500" height="7.500" fill="#fdfdfd" stroke="#555" stroke-width=".9"/><path d="M5.500 10l1-2.800 5.500-5.200 1.800 1.800-5.500 5.200z" fill="#f4c43a" stroke="#8a5a10" stroke-width=".5"/><path d="M11.200 2.800l1.200-1 1.700 1.700-1.100 1.100z" fill="#7a4ac8"/><path d="M5.500 10l.4-1.200.9.900z" fill="#333"/></svg>
<svg class="i" style="left:598.5px;top:475px" width="14" height="14" viewBox="0 0 14 14"><rect x="1.500" y="5" width="10.500" height="7.500" fill="#fdfdfd" stroke="#555" stroke-width=".9"/><path d="M5.500 10l1-2.800 5.500-5.200 1.800 1.800-5.500 5.200z" fill="#f4c43a" stroke="#8a5a10" stroke-width=".5"/><path d="M11.200 2.800l1.200-1 1.700 1.700-1.100 1.100z" fill="#7a4ac8"/><path d="M5.500 10l.4-1.200.9.900z" fill="#333"/></svg>
<svg class="i" style="left:598.5px;top:499px" width="14" height="14" viewBox="0 0 14 14"><rect x="1.500" y="5" width="10.500" height="7.500" fill="#fdfdfd" stroke="#555" stroke-width=".9"/><path d="M5.500 10l1-2.800 5.500-5.200 1.800 1.800-5.500 5.200z" fill="#f4c43a" stroke="#8a5a10" stroke-width=".5"/><path d="M11.200 2.800l1.200-1 1.700 1.700-1.100 1.100z" fill="#7a4ac8"/><path d="M5.500 10l.4-1.200.9.900z" fill="#333"/></svg>
<svg class="i" style="left:598.5px;top:522px" width="14" height="14" viewBox="0 0 14 14"><rect x="1.500" y="5" width="10.500" height="7.500" fill="#fdfdfd" stroke="#555" stroke-width=".9"/><path d="M5.500 10l1-2.800 5.500-5.200 1.800 1.800-5.500 5.200z" fill="#f4c43a" stroke="#8a5a10" stroke-width=".5"/><path d="M11.200 2.800l1.200-1 1.700 1.700-1.100 1.100z" fill="#7a4ac8"/><path d="M5.500 10l.4-1.200.9.900z" fill="#333"/></svg>
<span class="t b" style="left:275.8px;top:845px;transform:scaleX(0.918);transform-origin:0 0;">Progress %</span>
<div class="fld" style="left:437px;top:842px;width:135px;height:17px;"></div>
<span class="t" style="left:552.4px;top:844px;transform:scaleX(0.902);transform-origin:0 0;">0%</span>
<span class="t b" style="left:580.2px;top:845px;transform:scaleX(0.936);transform-origin:0 0;">Taxable</span>
<div class="ro" style="left:741px;top:842px;width:133px;height:17px;"></div>
<span class="t" style="left:831.6px;top:844px;transform:scaleX(0.871);transform-origin:0 0;">6,850.00</span>
<span class="t b" style="left:883px;top:845px;transform:scaleX(0.986);transform-origin:0 0;">Tax</span>
<div class="ro" style="left:1044px;top:842px;width:134px;height:17px;"></div>
<span class="t" style="left:1143.6px;top:844px;transform:scaleX(0.877);transform-origin:0 0;">411.00</span>
<span class="t b" style="left:1186.5px;top:845px;transform:scaleX(0.877);transform-origin:0 0;">Rounding Adj</span>
<div class="ro" style="left:1347px;top:842px;width:133px;height:17px;"></div>
<span class="t b" style="left:1489.4px;top:845px;transform:scaleX(0.902);transform-origin:0 0;">Due Amount</span>
<div class="ro" style="left:1650px;top:842px;width:144px;height:17px;"></div>
<span class="t" style="left:1751px;top:844px;transform:scaleX(0.858);transform-origin:0 0;">7,261.00</span>
<span class="t b" style="left:1489.4px;top:866px;transform:scaleX(0.902);transform-origin:0 0;">Total Points</span>
<div class="ro" style="left:1650px;top:863px;width:144px;height:18px;"></div>
<div style="left:115px;top:890.5px;width:1689px;height:23.5px;background:#e0e0de;border-top:1px solid #c8c8c6"></div>
<span class="t" style="left:119.3px;top:898px;transform:scaleX(0.834);transform-origin:0 0;">[Server: PC318\SQL2012(11.00.5388)]</span>
<span class="t" style="left:292.9px;top:898px;transform:scaleX(0.825);transform-origin:0 0;">[Database: SampleDB(2021.0.0.2)]</span>
<span class="t" style="left:449.4px;top:898px;transform:scaleX(0.829);transform-origin:0 0;">[Country: MY]</span>
<span class="t" style="left:516.2px;top:898px;transform:scaleX(0.817);transform-origin:0 0;">[Language: en-MY]</span>
<span class="t" style="left:604.3px;top:898px;transform:scaleX(0.78);transform-origin:0 0;">[Company: SAMPLE TRADING (M) SDN. BHD.]</span>
<span class="t" style="left:803.3px;top:898px;transform:scaleX(0.818);transform-origin:0 0;">User: ADMIN</span>
<svg class="i" style="left:1476px;top:896px" width="15" height="15" viewBox="0 0 15 15"><rect x="1" y="1" width="9" height="10" fill="#dff0d8" stroke="#6faa5a" stroke-width=".8"/><rect x="3" y="3" width="9" height="10" fill="#e8f4e4" stroke="#6faa5a" stroke-width=".8"/><rect x="6" y="6" width="8.500" height="8.500" fill="#e4eefb" stroke="#4f7fd0" stroke-width=".9"/><path d="M7.500 8.500h5.500M7.500 10.500h5.500M7.500 12.500h5.500M9.500 7v7M11.700 7v7" stroke="#4f7fd0" stroke-width=".7"/></svg>
<span class="t" style="left:1493.7px;top:898px;transform:scaleX(0.879);transform-origin:0 0;">Draft(s)</span>
<span class="t" style="left:1534.5px;top:898px;transform:scaleX(0.835);transform-origin:0 0;">Current Working Date:</span>
<div class="fld" style="left:1635px;top:894px;width:88px;height:17px;"></div>
<span class="t" style="left:1640.2px;top:898px;transform:scaleX(0.839);transform-origin:0 0;">16/06/2021</span>
<div class="dd" style="left:1713px;top:902px;width:0px;height:0px;border-left-width:2.5px;border-right-width:2.5px"></div>
<span class="t" style="left:1729.3px;top:898px;transform:scaleX(0.81);transform-origin:0 0;">QLS: Connected</span>
</body></html>
